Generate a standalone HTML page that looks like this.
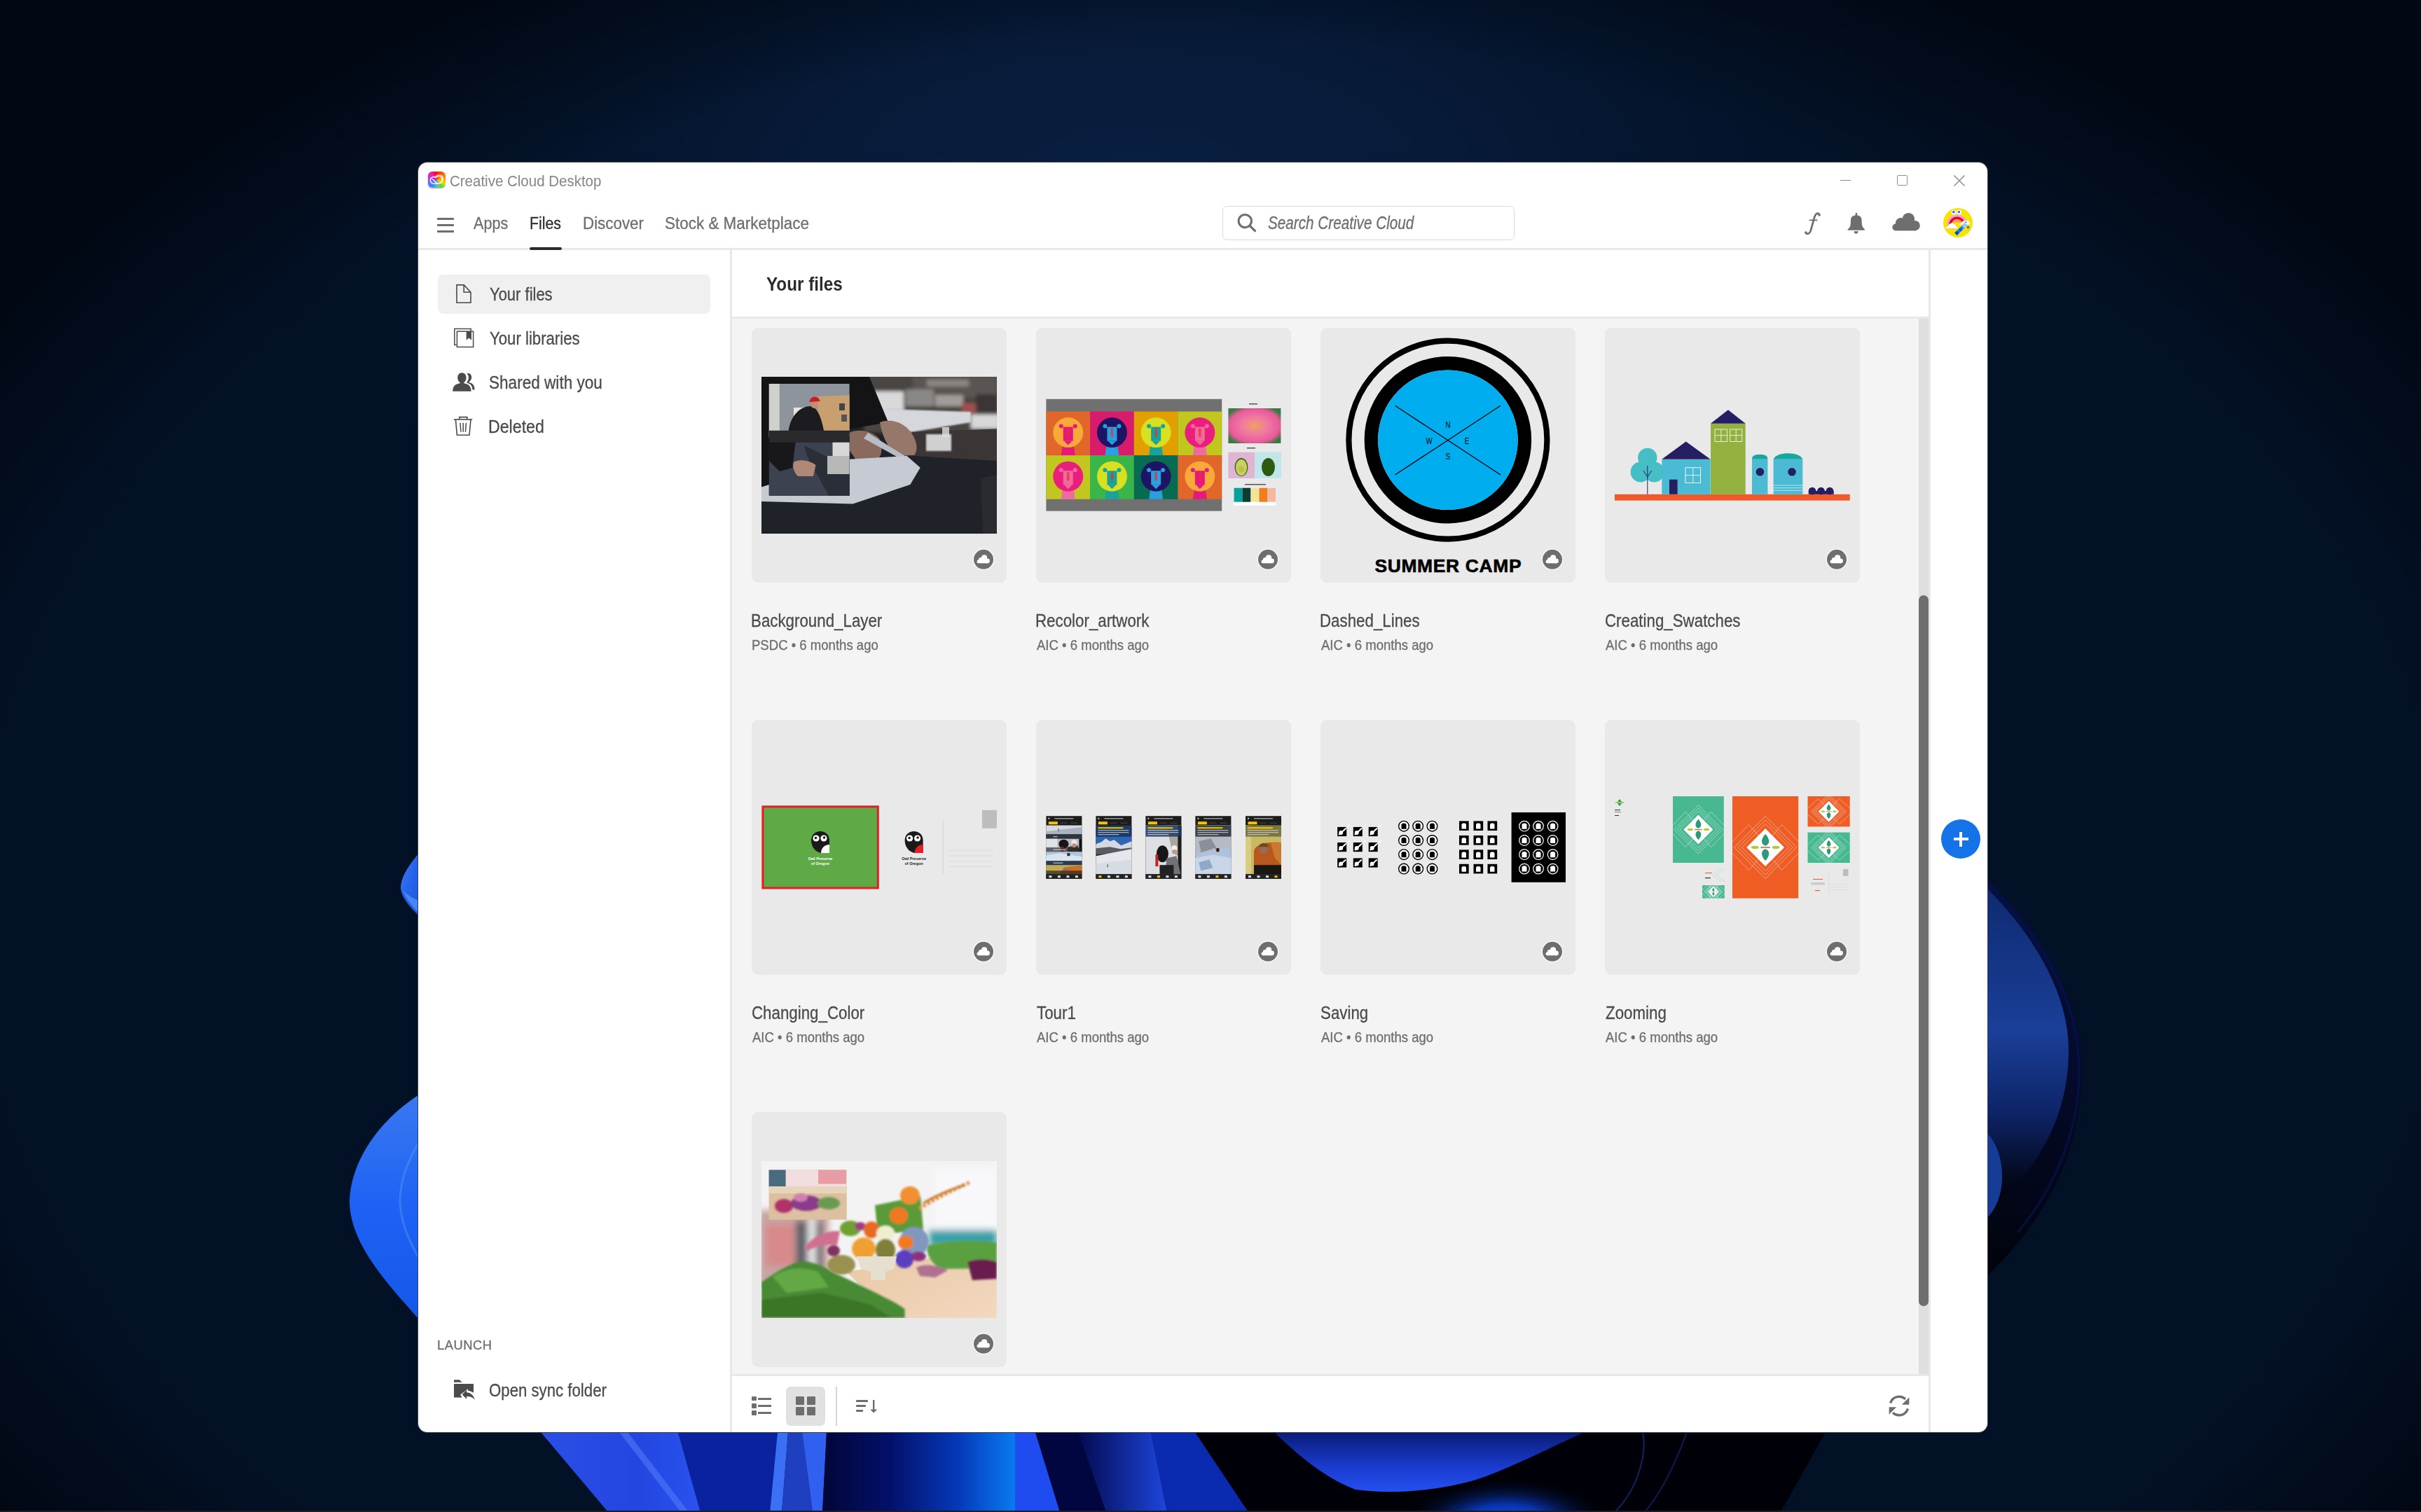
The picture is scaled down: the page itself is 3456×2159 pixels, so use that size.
<!DOCTYPE html>
<html><head><meta charset="utf-8"><title>Creative Cloud Desktop</title>
<style>
html,body{margin:0;padding:0;}
body{width:3456px;height:2159px;overflow:hidden;position:relative;background:#040b18;font-family:"Liberation Sans",sans-serif;}
.a{position:absolute;}
.t{position:absolute;white-space:nowrap;transform-origin:0 0;-webkit-text-stroke:0.3px currentColor;}
svg{position:absolute;overflow:visible;}
</style></head><body>
<svg style="left:0;top:0" width="3456" height="2159" viewBox="0 0 3456 2159">
<defs>
<radialGradient id="wglow" cx="1620" cy="250" r="1350" gradientUnits="userSpaceOnUse" gradientTransform="translate(1620 250) scale(1 0.45) translate(-1620 -250)">
<stop offset="0" stop-color="#0a1e40" stop-opacity="1"/>
<stop offset="0.35" stop-color="#081c3c" stop-opacity="0.8"/>
<stop offset="0.65" stop-color="#051630" stop-opacity="0.5"/>
<stop offset="1" stop-color="#031126" stop-opacity="0"/>
</radialGradient>
<radialGradient id="wvig" cx="1728" cy="1300" r="2100" gradientUnits="userSpaceOnUse" gradientTransform="translate(1728 1300) scale(1 0.714) translate(-1728 -1300)">
<stop offset="0" stop-color="#010814" stop-opacity="0"/>
<stop offset="0.83" stop-color="#010814" stop-opacity="0"/>
<stop offset="0.95" stop-color="#010814" stop-opacity="0.7"/>
<stop offset="1.12" stop-color="#010814" stop-opacity="1"/>
</radialGradient>
<linearGradient id="pl1" x1="0" y1="0" x2="1" y2="1">
<stop offset="0" stop-color="#3f7df2"/>
<stop offset="0.5" stop-color="#2463ea"/>
<stop offset="1" stop-color="#1a55e0"/>
</linearGradient>
<linearGradient id="pl2" x1="0" y1="0" x2="0" y2="1">
<stop offset="0" stop-color="#3a78f0"/>
<stop offset="0.5" stop-color="#1d62f5"/>
<stop offset="1" stop-color="#1658e8"/>
</linearGradient>
<radialGradient id="rb" cx="2800" cy="1480" r="200" gradientUnits="userSpaceOnUse">
<stop offset="0" stop-color="#1a45a8"/>
<stop offset="0.6" stop-color="#143a98"/>
<stop offset="1" stop-color="#071a55"/>
</radialGradient>
<linearGradient id="bb1" x1="0" y1="0" x2="1" y2="0">
<stop offset="0" stop-color="#020646"/>
<stop offset="0.55" stop-color="#041c8a"/>
<stop offset="1" stop-color="#0a7cf2"/>
</linearGradient>
<linearGradient id="bb2" x1="0" y1="0" x2="1" y2="0">
<stop offset="0" stop-color="#010430"/>
<stop offset="1" stop-color="#1e48e0"/>
</linearGradient>
<linearGradient id="bw" x1="0" y1="0" x2="0" y2="1">
<stop offset="0" stop-color="#071a70"/>
<stop offset="1" stop-color="#2148ea"/>
</linearGradient>
<linearGradient id="rbo" x1="0" y1="0" x2="0" y2="1"><stop offset="0" stop-color="#061040"/><stop offset="0.5" stop-color="#040a2a"/><stop offset="1" stop-color="#01030a"/></linearGradient>
<linearGradient id="rbi" x1="0" y1="0" x2="0" y2="1"><stop offset="0" stop-color="#0e2a70"/><stop offset="0.45" stop-color="#1a3f98"/><stop offset="0.7" stop-color="#0d2466"/><stop offset="0.92" stop-color="#020616"/><stop offset="1" stop-color="#01030c"/></linearGradient>
</defs>
<rect x="0" y="0" width="3456" height="2159" fill="#031126"/>
<rect x="0" y="0" width="3456" height="2159" fill="url(#wglow)"/>
<rect x="0" y="0" width="3456" height="2159" fill="url(#wvig)"/>
<!-- left petals -->
<path d="M600 1216 C588 1230 572 1250 572 1268 C573 1282 586 1296 600 1310 Z" fill="url(#pl1)"/>
<path d="M600 1286 C590 1284 582 1278 576 1272 C580 1284 590 1296 600 1306 Z" fill="#5a98f5" opacity="0.7"/>
<path d="M600 1562 C540 1600 500 1660 499 1716 C500 1780 560 1840 600 1886 Z" fill="url(#pl2)"/>
<path d="M600 1628 C580 1660 571 1690 571 1716 C572 1745 585 1775 600 1800" fill="none" stroke="#5d95f0" stroke-width="3" opacity="0.45"/>
<!-- right bloom -->
<path d="M2830 1250 C2910 1320 2972 1420 2972 1530 C2972 1650 2915 1750 2830 1828 Z" fill="url(#rbo)"/>
<path d="M2830 1258 C2905 1325 2968 1420 2968 1530 C2968 1620 2930 1700 2880 1760" fill="none" stroke="#06124a" stroke-width="4" opacity="0.7"/>
<path d="M2830 1262 C2905 1335 2953 1420 2953 1500 C2953 1580 2920 1650 2870 1700 C2855 1712 2842 1722 2830 1730 Z" fill="url(#rbi)"/>
<path d="M2830 1612 C2848 1625 2858 1652 2858 1680 C2858 1708 2848 1730 2830 1746 Z" fill="#173c95"/>
<!-- bottom petals -->
<defs>
<linearGradient id="pA" x1="0" y1="0" x2="1" y2="0"><stop offset="0" stop-color="#2a4ee6"/><stop offset="0.6" stop-color="#2346e0"/><stop offset="1" stop-color="#2a52ee"/></linearGradient>
<linearGradient id="pNav" x1="0" y1="0" x2="1" y2="0"><stop offset="0" stop-color="#010638"/><stop offset="0.35" stop-color="#03106a"/><stop offset="0.7" stop-color="#0538b8"/><stop offset="1" stop-color="#0a7af2"/></linearGradient>
<linearGradient id="pGr" x1="0" y1="0" x2="1" y2="0"><stop offset="0" stop-color="#030a50"/><stop offset="1" stop-color="#1e46dc"/></linearGradient>
<linearGradient id="pW" x1="0" y1="0" x2="0" y2="1"><stop offset="0" stop-color="#0a1c78"/><stop offset="0.6" stop-color="#1a3cd0"/><stop offset="1" stop-color="#2450f0"/></linearGradient>
<radialGradient id="pGlow" cx="0.5" cy="0.5" r="0.5"><stop offset="0" stop-color="#1a6cff"/><stop offset="0.45" stop-color="#0a40d8" stop-opacity="0.8"/><stop offset="1" stop-color="#000108" stop-opacity="0"/></radialGradient>
</defs>
<g>
<path d="M772 2045 L968 2045 L1000 2159 L868 2159 Z" fill="url(#pA)"/>
<path d="M884 2045 L896 2045 L983 2159 L972 2159 Z" fill="#4a72f5" opacity="0.7"/>
<path d="M968 2045 L1110 2045 L1099 2159 L1000 2159 Z" fill="#0a22a0"/>
<path d="M1110 2045 L1125 2045 L1116 2159 L1099 2159 Z" fill="#3a70f5"/>
<path d="M1125 2045 L1145 2045 L1160 2159 L1116 2159 Z" fill="#1d3fc0"/>
<path d="M1145 2045 L1180 2045 L1174 2159 L1160 2159 Z" fill="#3060f0"/>
<path d="M1180 2045 L1449 2045 L1449 2159 L1174 2159 Z" fill="url(#pNav)"/>
<path d="M1449 2045 L1478 2045 L1513 2159 L1449 2159 Z" fill="#1f4cf0"/>
<path d="M1478 2045 L1539 2045 L1579 2159 L1513 2159 Z" fill="#020640"/>
<path d="M1539 2045 L1643 2045 L1666 2159 L1579 2159 Z" fill="url(#pGr)"/>
<path d="M1643 2045 L1706 2045 L1782 2159 L1666 2159 Z" fill="#0a2ab0"/>
<path d="M1706 2045 L2606 2045 L2542 2159 L1782 2159 Z" fill="#000108"/>
<path d="M1819 2045 L2262 2045 C2210 2068 2150 2100 2100 2115 C2030 2133 1975 2132 1935 2127 C1890 2110 1850 2075 1819 2045 Z" fill="url(#pW)"/>
<ellipse cx="2150" cy="2180" rx="150" ry="70" fill="url(#pGlow)"/>
<path d="M2345 2045 C2352 2080 2335 2130 2305 2159" fill="none" stroke="#1a3aa0" stroke-width="2" opacity="0.6"/>
<path d="M2408 2045 C2392 2090 2372 2130 2348 2159" fill="none" stroke="#1a3aa0" stroke-width="2" opacity="0.5"/>
</g>
<rect x="0" y="2157" width="3456" height="2" fill="#1e1e22"/>
</svg>

<!-- window -->
<div class="a" style="left:596px;top:231px;width:2242px;height:1815px;border-radius:14px;background:#3a3f48;"></div>
<div class="a" style="left:597px;top:232px;width:2240px;height:1813px;border-radius:13px;background:#ffffff;overflow:hidden;">
</div>
<!-- header separator -->
<div class="a" style="left:597px;top:354px;width:2240px;height:3px;background:#e8e8e8;"></div>
<!-- tab underline -->
<div class="a" style="left:756px;top:353px;width:46px;height:4px;border-radius:2px;background:#2c2c2c;"></div>
<!-- sidebar border -->
<div class="a" style="left:1042px;top:357px;width:3px;height:1688px;background:#e8e8e8;"></div>
<!-- right border -->
<div class="a" style="left:2753px;top:357px;width:3px;height:1688px;background:#e8e8e8;"></div>
<!-- main header bottom border -->
<div class="a" style="left:1045px;top:452px;width:1708px;height:3px;background:#e8e8e8;"></div>
<!-- content bg -->
<div class="a" style="left:1045px;top:455px;width:1694px;height:1507px;background:#f4f4f4;overflow:hidden;">
</div>
<!-- scroll track + thumb -->
<div class="a" style="left:2739px;top:455px;width:14px;height:1507px;background:#dfdfdf;"></div>
<div class="a" style="left:2739px;top:850px;width:14px;height:1015px;border-radius:7px;background:#6e6e6e;"></div>
<!-- bottom toolbar border -->
<div class="a" style="left:1045px;top:1962px;width:1708px;height:3px;background:#e8e8e8;"></div>
<!-- selected sidebar item -->
<div class="a" style="left:625px;top:392px;width:389px;height:56px;border-radius:8px;background:#f0f0f0;"></div>
<!-- search box -->
<div class="a" style="left:1745px;top:294px;width:415px;height:47px;border-radius:7px;border:1px solid #d9d9d9;background:#fff;"></div>
<!-- grid button bg -->
<div class="a" style="left:1122px;top:1980px;width:56px;height:56px;border-radius:7px;background:#e1e1e1;"></div>
<div class="a" style="left:1193px;top:1980px;width:1.5px;height:56px;background:#d5d5d5;"></div>
<!-- plus button -->
<div class="a" style="left:2771px;top:1170px;width:56px;height:56px;border-radius:28px;background:#1473e6;"></div>
<div class="a" style="left:2788.5px;top:1196.3px;width:21px;height:3.4px;background:#fff;"></div>
<div class="a" style="left:2797.3px;top:1187.5px;width:3.4px;height:21px;background:#fff;"></div>
<!-- cards -->
<div class="a" style="left:1073px;top:468px;width:364px;height:364px;border-radius:9px;background:#e9e9e9;"></div>
<div class="a" style="left:1479px;top:468px;width:364px;height:364px;border-radius:9px;background:#e9e9e9;"></div>
<div class="a" style="left:1885px;top:468px;width:364px;height:364px;border-radius:9px;background:#e9e9e9;"></div>
<div class="a" style="left:2291px;top:468px;width:364px;height:364px;border-radius:9px;background:#e9e9e9;"></div>
<div class="a" style="left:1073px;top:1028px;width:364px;height:364px;border-radius:9px;background:#e9e9e9;"></div>
<div class="a" style="left:1479px;top:1028px;width:364px;height:364px;border-radius:9px;background:#e9e9e9;"></div>
<div class="a" style="left:1885px;top:1028px;width:364px;height:364px;border-radius:9px;background:#e9e9e9;"></div>
<div class="a" style="left:2291px;top:1028px;width:364px;height:364px;border-radius:9px;background:#e9e9e9;"></div>
<div class="a" style="left:1073px;top:1588px;width:364px;height:364px;border-radius:9px;background:#e9e9e9;"></div>
<svg style="left:1073px;top:468px" width="364" height="364" viewBox="0 0 364 364" >
<defs>
<filter id="c1blur" x="-20%" y="-20%" width="140%" height="140%"><feGaussianBlur stdDeviation="2.5"/></filter>
<filter id="c1blur2" x="-20%" y="-20%" width="140%" height="140%"><feGaussianBlur stdDeviation="0.8"/></filter>
<clipPath id="c1clip"><rect x="14" y="70" width="336" height="224"/></clipPath>
</defs>
<g clip-path="url(#c1clip)">
<rect x="14" y="70" width="336" height="224" fill="#1f2228"/>
<g filter="url(#c1blur)">
<rect x="160" y="60" width="200" height="90" fill="#4a4543"/>
<rect x="230" y="70" width="120" height="30" fill="#5a5553"/>
<rect x="250" y="74" width="60" height="10" fill="#8a8580"/>
<rect x="173" y="91" width="44" height="28" fill="#d9d9d9"/>
<rect x="220" y="88" width="40" height="24" fill="#8a8886"/>
<rect x="262" y="96" width="40" height="16" fill="#a09c98"/>
<rect x="300" y="108" width="20" height="14" fill="#a05050"/>
<rect x="313" y="124" width="40" height="20" fill="#d8d8d8"/>
<rect x="320" y="95" width="30" height="25" fill="#3a3636"/>
</g>
<path d="M183 115.5 L313 120 L313 135 L228.7 149 L197.4 144.4 Z" fill="#d5d7dc" filter="url(#c1blur2)"/>
<path d="M14 70 L168 70 L195 135 L139.6 144.4 L139.6 190 L14 227.5 Z" fill="#141416"/>
<path d="M228.7 149 L350 144.4 L350 190 L231 183 Z" fill="#3b3535"/>
<path d="M183 135 C195 130 215 132 228 150 C236 162 238 175 232 182 L205 183 C195 170 186 155 183 135 Z" fill="#96786a"/>
<path d="M139.6 150 C150 144 170 146 182 158 C188 170 186 182 180 187.8 L150 190 L139.6 175 Z" fill="#8a6a5c"/>
<path d="M166 150 L222 185 L218 190 L160 158 Z" fill="#b8bcc4"/>
<rect x="249" y="152" width="36" height="24" fill="#d0d0d0" filter="url(#c1blur2)"/>
<rect x="272" y="142" width="10" height="14" fill="#e0e0e2" opacity="0.8"/>
<path d="M14 227.5 L139.6 187.8 L221.5 183 L240.7 199.8 L226.3 224 L144.4 251.6 L14 248 Z" fill="#c6cad2"/>
<path d="M327 215 L350 210 L350 294 L330 294 Z" fill="#2a2b30"/>
<!-- inset -->
<rect x="24.8" y="80" width="114.8" height="160" fill="#111113"/>
<rect x="24.8" y="80" width="114.8" height="76.5" fill="#8d949c"/>
<rect x="24.8" y="80" width="15" height="76.5" fill="#d0d0cc"/>
<path d="M93.9 98 L139.6 96.3 L139.6 146.8 L93.9 146.8 Z" fill="#c8a070"/>
<rect x="125" y="108" width="8" height="10" fill="#444"/><rect x="128" y="124" width="8" height="10" fill="#555"/>
<rect x="60" y="114" width="18" height="26" fill="#e4e4e2"/>
<path d="M52 152 C54 125 70 112 84 112 C95 114 100 130 104 152 Z" fill="#1c1c20"/>
<circle cx="89.5" cy="109.5" r="5.2" fill="#c09070"/>
<path d="M82.5 106 C83 97 96 96 97.5 105 Z" fill="#d0182a"/>
<rect x="24.8" y="146.8" width="114.8" height="16.9" fill="#2a2a2c"/>
<rect x="24.8" y="163.7" width="114.8" height="76.3" fill="#3c4250"/>
<path d="M24.8 163.7 L62.6 163.7 L58 200 L40 205 L24.8 190 Z" fill="#18181a"/>
<path d="M75 168 L139.6 200 L139.6 240 L110 240 L80 185 Z" fill="#2a2e36"/>
<rect x="115.5" y="163.7" width="24.1" height="19.3" fill="#d8d8d8"/>
<rect x="108" y="183" width="31.6" height="26" fill="#b8b8b8"/>
<path d="M60 192 C66 188 80 188 91.5 196 L88 212 L66 212 C60 206 58 198 60 192 Z" fill="#b08878"/>
</g>
</svg>
<svg style="left:1073px;top:468px" width="364" height="364" viewBox="0 0 364 364" ><circle cx="331" cy="330.8" r="15.3" fill="#ffffff" opacity="0.85"/>
<circle cx="331" cy="330.8" r="14" fill="#6e6e6e"/>
<g fill="#fff"><circle cx="323.9" cy="333.9" r="2.4"/><circle cx="327.2" cy="331.4" r="3.3"/><circle cx="332.1" cy="328.4" r="4.1"/><circle cx="336.5" cy="332.9" r="3.4"/><rect x="323.9" y="331" width="12.6" height="5.3"/><rect x="327" y="328.5" width="6" height="4"/></g></svg>
<svg style="left:1477px;top:468px" width="364" height="364" viewBox="0 0 364 364" ><rect x="16.4" y="101.8" width="250.8" height="159.9" fill="#707070"/><rect x="16.4" y="119.6" width="62.7" height="62.6" fill="#e0662a"/><path d="M37.75 182.2 L39.75 168.6 L55.75 168.6 L57.75 182.2 Z" fill="#e6197a"/><circle cx="47.75" cy="149.6" r="21.5" fill="#f9a93a"/><circle cx="37.75" cy="140.6" r="3" fill="#e6197a"/><circle cx="57.75" cy="140.6" r="3" fill="#e6197a"/><rect x="40.75" y="141.6" width="14" height="20" fill="#e6197a"/><path d="M41.75 161.6 L53.75 161.6 L47.75 167.6 Z" fill="#e6197a"/><rect x="45.95" y="143.6" width="3.6" height="12" fill="#e63030" opacity="0.7"/><rect x="79.1" y="119.6" width="62.7" height="62.6" fill="#d81b6a"/><path d="M100.44999999999999 182.2 L102.44999999999999 168.6 L118.44999999999999 168.6 L120.44999999999999 182.2 Z" fill="#2aa0e0"/><circle cx="110.44999999999999" cy="149.6" r="21.5" fill="#1d1464"/><circle cx="100.44999999999999" cy="140.6" r="3" fill="#2aa0e0"/><circle cx="120.44999999999999" cy="140.6" r="3" fill="#2aa0e0"/><rect x="103.44999999999999" y="141.6" width="14" height="20" fill="#2aa0e0"/><path d="M104.44999999999999 161.6 L116.44999999999999 161.6 L110.44999999999999 167.6 Z" fill="#2aa0e0"/><rect x="108.64999999999999" y="143.6" width="3.6" height="12" fill="#e63030" opacity="0.7"/><rect x="141.8" y="119.6" width="62.7" height="62.6" fill="#e2a000"/><path d="M163.15 182.2 L165.15 168.6 L181.15 168.6 L183.15 182.2 Z" fill="#17a39a"/><circle cx="173.15" cy="149.6" r="21.5" fill="#d7e021"/><circle cx="163.15" cy="140.6" r="3" fill="#17a39a"/><circle cx="183.15" cy="140.6" r="3" fill="#17a39a"/><rect x="166.15" y="141.6" width="14" height="20" fill="#17a39a"/><path d="M167.15 161.6 L179.15 161.6 L173.15 167.6 Z" fill="#17a39a"/><rect x="171.35" y="143.6" width="3.6" height="12" fill="#e63030" opacity="0.7"/><rect x="204.5" y="119.6" width="62.7" height="62.6" fill="#c1c71f"/><path d="M225.85 182.2 L227.85 168.6 L243.85 168.6 L245.85 182.2 Z" fill="#f06aa0"/><circle cx="235.85" cy="149.6" r="21.5" fill="#e91e7d"/><circle cx="225.85" cy="140.6" r="3" fill="#f06aa0"/><circle cx="245.85" cy="140.6" r="3" fill="#f06aa0"/><rect x="228.85" y="141.6" width="14" height="20" fill="#f06aa0"/><path d="M229.85 161.6 L241.85 161.6 L235.85 167.6 Z" fill="#f06aa0"/><rect x="234.04999999999998" y="143.6" width="3.6" height="12" fill="#e63030" opacity="0.7"/><rect x="16.4" y="182.2" width="62.7" height="62.6" fill="#c1c71f"/><path d="M37.75 244.79999999999998 L39.75 231.2 L55.75 231.2 L57.75 244.79999999999998 Z" fill="#f06aa0"/><circle cx="47.75" cy="212.2" r="21.5" fill="#e91e7d"/><circle cx="37.75" cy="203.2" r="3" fill="#f06aa0"/><circle cx="57.75" cy="203.2" r="3" fill="#f06aa0"/><rect x="40.75" y="204.2" width="14" height="20" fill="#f06aa0"/><path d="M41.75 224.2 L53.75 224.2 L47.75 230.2 Z" fill="#f06aa0"/><rect x="45.95" y="206.2" width="3.6" height="12" fill="#e63030" opacity="0.7"/><rect x="79.1" y="182.2" width="62.7" height="62.6" fill="#3ab54a"/><path d="M100.44999999999999 244.79999999999998 L102.44999999999999 231.2 L118.44999999999999 231.2 L120.44999999999999 244.79999999999998 Z" fill="#17a39a"/><circle cx="110.44999999999999" cy="212.2" r="21.5" fill="#d7e021"/><circle cx="100.44999999999999" cy="203.2" r="3" fill="#17a39a"/><circle cx="120.44999999999999" cy="203.2" r="3" fill="#17a39a"/><rect x="103.44999999999999" y="204.2" width="14" height="20" fill="#17a39a"/><path d="M104.44999999999999 224.2 L116.44999999999999 224.2 L110.44999999999999 230.2 Z" fill="#17a39a"/><rect x="108.64999999999999" y="206.2" width="3.6" height="12" fill="#e63030" opacity="0.7"/><rect x="141.8" y="182.2" width="62.7" height="62.6" fill="#076b52"/><path d="M163.15 244.79999999999998 L165.15 231.2 L181.15 231.2 L183.15 244.79999999999998 Z" fill="#2aa0e0"/><circle cx="173.15" cy="212.2" r="21.5" fill="#1d1464"/><circle cx="163.15" cy="203.2" r="3" fill="#2aa0e0"/><circle cx="183.15" cy="203.2" r="3" fill="#2aa0e0"/><rect x="166.15" y="204.2" width="14" height="20" fill="#2aa0e0"/><path d="M167.15 224.2 L179.15 224.2 L173.15 230.2 Z" fill="#2aa0e0"/><rect x="171.35" y="206.2" width="3.6" height="12" fill="#e63030" opacity="0.7"/><rect x="204.5" y="182.2" width="62.7" height="62.6" fill="#e0662a"/><path d="M225.85 244.79999999999998 L227.85 231.2 L243.85 231.2 L245.85 244.79999999999998 Z" fill="#e6197a"/><circle cx="235.85" cy="212.2" r="21.5" fill="#f9a93a"/><circle cx="225.85" cy="203.2" r="3" fill="#e6197a"/><circle cx="245.85" cy="203.2" r="3" fill="#e6197a"/><rect x="228.85" y="204.2" width="14" height="20" fill="#e6197a"/><path d="M229.85 224.2 L241.85 224.2 L235.85 230.2 Z" fill="#e6197a"/><rect x="234.04999999999998" y="206.2" width="3.6" height="12" fill="#e63030" opacity="0.7"/>
<rect x="306" y="108" width="12" height="1.5" fill="#555"/>
<defs><radialGradient id="flw" cx="0.5" cy="0.5" r="0.6"><stop offset="0" stop-color="#f0a060"/><stop offset="0.4" stop-color="#f07aa0"/><stop offset="0.8" stop-color="#e85a9a"/><stop offset="1" stop-color="#3a7a40"/></radialGradient></defs>
<rect x="276.4" y="115" width="75" height="50" fill="url(#flw)"/>
<rect x="303" y="171" width="12" height="1.5" fill="#555"/>
<rect x="276.4" y="177.7" width="37.6" height="37.3" fill="#e0b4d3"/>
<rect x="314" y="177.7" width="38" height="37.3" fill="#c0e6ea"/>
<ellipse cx="295" cy="199" rx="9.5" ry="13" fill="#3a6a20"/><ellipse cx="295" cy="199.5" rx="8" ry="11.5" fill="#c8d060"/><circle cx="295" cy="202" r="4.5" fill="#b8c050"/>
<ellipse cx="333.5" cy="199" rx="9.5" ry="13" fill="#2e5a10"/>
<rect x="300" y="223" width="30" height="1.5" fill="#555"/>
<rect x="284" y="228.7" width="60" height="25" fill="#ffffff"/>
<rect x="284.5" y="228.7" width="12" height="20" fill="#05a19a"/>
<rect x="296.5" y="228.7" width="12" height="20" fill="#0a3d35"/>
<rect x="308.5" y="228.7" width="12" height="20" fill="#f3e49a"/>
<rect x="320.5" y="228.7" width="12" height="20" fill="#f07e1a"/>
<rect x="332.5" y="228.7" width="11.5" height="20" fill="#f3b8a0"/>
</svg>
<svg style="left:1479px;top:468px" width="364" height="364" viewBox="0 0 364 364" ><circle cx="331" cy="330.8" r="15.3" fill="#ffffff" opacity="0.85"/>
<circle cx="331" cy="330.8" r="14" fill="#6e6e6e"/>
<g fill="#fff"><circle cx="323.9" cy="333.9" r="2.4"/><circle cx="327.2" cy="331.4" r="3.3"/><circle cx="332.1" cy="328.4" r="4.1"/><circle cx="336.5" cy="332.9" r="3.4"/><rect x="323.9" y="331" width="12.6" height="5.3"/><rect x="327" y="328.5" width="6" height="4"/></g></svg>
<svg style="left:1882px;top:468px" width="364" height="364" viewBox="0 0 364 364" >
<circle cx="184.9" cy="160.2" r="141.5" fill="none" stroke="#000" stroke-width="8.2"/>
<circle cx="184.9" cy="160.2" r="109.5" fill="none" stroke="#000" stroke-width="19.5"/>
<circle cx="184.9" cy="160.2" r="99.8" fill="#00adef"/>
<path d="M109.5 111.2 L260 210 M109.5 210 L260 111.2" stroke="#000" stroke-width="1.3"/>
<text x="185" y="143.5" font-family="Liberation Sans" font-size="13" text-anchor="middle" fill="#000" transform="translate(185 0) scale(0.75 1) translate(-185 0)">N</text>
<text x="158" y="166" font-family="Liberation Sans" font-size="13" text-anchor="middle" fill="#000" transform="translate(158 0) scale(0.75 1) translate(-158 0)">W</text>
<text x="212" y="166" font-family="Liberation Sans" font-size="13" text-anchor="middle" fill="#000" transform="translate(212 0) scale(0.75 1) translate(-212 0)">E</text>
<text x="185" y="188" font-family="Liberation Sans" font-size="13" text-anchor="middle" fill="#000" transform="translate(185 0) scale(0.75 1) translate(-185 0)">S</text>
<text x="185.3" y="349.4" font-family="Liberation Sans" font-weight="700" font-size="26.5" text-anchor="middle" fill="#000" letter-spacing="0.6" stroke="#000" stroke-width="0.6">SUMMER CAMP</text>
</svg>
<svg style="left:1885px;top:468px" width="364" height="364" viewBox="0 0 364 364" ><circle cx="331" cy="330.8" r="15.3" fill="#ffffff" opacity="0.85"/>
<circle cx="331" cy="330.8" r="14" fill="#6e6e6e"/>
<g fill="#fff"><circle cx="323.9" cy="333.9" r="2.4"/><circle cx="327.2" cy="331.4" r="3.3"/><circle cx="332.1" cy="328.4" r="4.1"/><circle cx="336.5" cy="332.9" r="3.4"/><rect x="323.9" y="331" width="12.6" height="5.3"/><rect x="327" y="328.5" width="6" height="4"/></g></svg>
<svg style="left:2288px;top:468px" width="364" height="364" viewBox="0 0 364 364" >
<rect x="16.9" y="237.8" width="335.8" height="8.9" fill="#f05a28"/>
<g fill="#45bfc4"><circle cx="63.8" cy="185.4" r="13.7"/><circle cx="54" cy="206" r="14.4"/><circle cx="73.4" cy="206" r="14.4"/></g>
<path d="M63.8 197 L63.8 237.8 M58 204 L63.8 213 L69.6 204" fill="none" stroke="#261e63" stroke-width="1"/>
<rect x="84.3" y="187.8" width="69.3" height="50" fill="#4bbbd3"/>
<path d="M84.3 187.8 L118.7 162.5 L153.6 187.8 Z" fill="#261e63"/>
<rect x="95" y="216.7" width="11.6" height="21.1" fill="#261e63"/>
<rect x="118" y="199.8" width="21.6" height="21.7" fill="none" stroke="#fff" stroke-width="0.9"/>
<path d="M128.8 199.8 L128.8 221.5 M118 210.6 L139.6 210.6" stroke="#fff" stroke-width="0.8"/>
<rect x="154" y="136.7" width="49.7" height="101.1" fill="#92b13f"/>
<path d="M154 136.7 L178.9 117.2 L203.7 136.7 Z" fill="#261e63"/>
<g fill="none" stroke="#fff" stroke-width="0.8"><rect x="160" y="145" width="17.7" height="17.5"/><rect x="181.7" y="145" width="17.1" height="17.5"/><path d="M168.8 145 L168.8 162.5 M160 153.7 L177.7 153.7 M190.2 145 L190.2 162.5 M181.7 153.7 L198.8 153.7"/></g>
<rect x="213" y="187.8" width="22.4" height="50" fill="#4bbbd3"/>
<path d="M213 187.8 C213 182 218 181 224.2 181 C230 181 235.4 182 235.4 187.8 Z" fill="#16a89e"/>
<circle cx="224.4" cy="205.8" r="5.8" fill="#261e63"/>
<rect x="243.6" y="187.8" width="41.7" height="50" fill="#4bbbd3"/>
<path d="M243.6 187.8 C246 182 255 179.3 264.5 179.3 C274 179.3 283 182 285.3 187.8 Z" fill="#16a89e"/>
<circle cx="270" cy="205.8" r="5.8" fill="#261e63"/>
<path d="M243.6 225 L285.3 225 M243.6 228.7 L285.3 228.7 M243.6 232.3 L285.3 232.3" stroke="#e8f4f8" stroke-width="0.7"/>
<g fill="#261e63"><circle cx="299" cy="233" r="5.3"/><circle cx="311.5" cy="233" r="5.3"/><circle cx="324" cy="233" r="5.3"/><rect x="293.7" y="233" width="36" height="4.8"/></g>
</svg>
<svg style="left:2291px;top:468px" width="364" height="364" viewBox="0 0 364 364" ><circle cx="331" cy="330.8" r="15.3" fill="#ffffff" opacity="0.85"/>
<circle cx="331" cy="330.8" r="14" fill="#6e6e6e"/>
<g fill="#fff"><circle cx="323.9" cy="333.9" r="2.4"/><circle cx="327.2" cy="331.4" r="3.3"/><circle cx="332.1" cy="328.4" r="4.1"/><circle cx="336.5" cy="332.9" r="3.4"/><rect x="323.9" y="331" width="12.6" height="5.3"/><rect x="327" y="328.5" width="6" height="4"/></g></svg>
<svg style="left:1073px;top:1028px" width="364" height="364" viewBox="0 0 364 364" >
<rect x="14.4" y="122.3" width="167.4" height="119.2" fill="#e31e24"/>
<rect x="17.4" y="125.3" width="161.4" height="113.2" fill="#5fa946"/>

<path d="M85 172 C85 164 91 159 98 159 C105 159 111 164 111 172 L111 190 L101 190 C92 190 85 182 85 172 Z" fill="#1a1a1a"/>
<path d="M111 178 L111 190 L99 190 C99 183 104 178 111 178 Z" fill="#ffffff"/>
<circle cx="92" cy="169" r="4.6" fill="#fff"/><circle cx="103" cy="169" r="4.6" fill="#fff"/>
<circle cx="91.5" cy="168.5" r="1.8" fill="#1a1a1a"/><circle cx="103.5" cy="168" r="1.8" fill="#1a1a1a"/>
<text x="98" y="200" font-family="Liberation Sans" font-weight="700" font-size="5.5" text-anchor="middle" fill="#ffffff">Owl Preserve</text>
<text x="98" y="207" font-family="Liberation Sans" font-weight="700" font-size="5.5" text-anchor="middle" fill="#ffffff">of Oregon</text>

<path d="M218.6 172 C218.6 164 224.6 159 231.6 159 C238.6 159 244.6 164 244.6 172 L244.6 190 L234.6 190 C225.6 190 218.6 182 218.6 172 Z" fill="#1a1a1a"/>
<path d="M244.6 178 L244.6 190 L232.6 190 C232.6 183 237.6 178 244.6 178 Z" fill="#e31e24"/>
<circle cx="225.6" cy="169" r="4.6" fill="#fff"/><circle cx="236.6" cy="169" r="4.6" fill="#fff"/>
<circle cx="225.1" cy="168.5" r="1.8" fill="#1a1a1a"/><circle cx="237.1" cy="168" r="1.8" fill="#1a1a1a"/>
<text x="231.6" y="200" font-family="Liberation Sans" font-weight="700" font-size="5.5" text-anchor="middle" fill="#1a1a1a">Owl Preserve</text>
<text x="231.6" y="207" font-family="Liberation Sans" font-weight="700" font-size="5.5" text-anchor="middle" fill="#1a1a1a">of Oregon</text>
<rect x="272.8" y="144" width="0.8" height="76" fill="#d0d0d0"/>
<rect x="329" y="128.8" width="21" height="26" fill="#bdbdbd"/>
<g fill="#d4d4d4"><rect x="282" y="185.8" width="63" height="0.7"/><rect x="282" y="193.6" width="63" height="0.7"/><rect x="282" y="201.4" width="63" height="0.7"/><rect x="282" y="209.2" width="63" height="0.7"/></g>
</svg>
<svg style="left:1073px;top:1028px" width="364" height="364" viewBox="0 0 364 364" ><circle cx="331" cy="330.8" r="15.3" fill="#ffffff" opacity="0.85"/>
<circle cx="331" cy="330.8" r="14" fill="#6e6e6e"/>
<g fill="#fff"><circle cx="323.9" cy="333.9" r="2.4"/><circle cx="327.2" cy="331.4" r="3.3"/><circle cx="332.1" cy="328.4" r="4.1"/><circle cx="336.5" cy="332.9" r="3.4"/><rect x="323.9" y="331" width="12.6" height="5.3"/><rect x="327" y="328.5" width="6" height="4"/></g></svg>
<svg style="left:1477px;top:1028px" width="364" height="364" viewBox="0 0 364 364" ><rect x="16.4" y="137.2" width="51" height="89.6" fill="#1c1c1c"/><path d="M16.4 150.6 L67.4 150.6 L67.4 163.2 L16.4 163.2 Z" fill="#d4d8e0"/><path d="M16.4 159.2 L67.4 153.2 L67.4 163.2 L16.4 163.2 Z" fill="#aab2bf"/><rect x="33.4" y="155.2" width="1.5" height="4" fill="#8a6a30"/><rect x="16.4" y="163.2" width="51" height="6.5" fill="#30343c"/><rect x="26.4" y="166.2" width="6" height="1" fill="#ddd"/><rect x="16.4" y="169.7" width="51" height="18.5" fill="#b8bcc4"/><rect x="16.4" y="169.7" width="16" height="12" fill="#e0e2e6"/><ellipse cx="41.4" cy="177.2" rx="7" ry="6.5" fill="#161616"/><rect x="37.4" y="181.2" width="4" height="7" fill="#b82020"/><path d="M46.4 188.2 L47.4 181.2 L61.4 179.2 L64.4 188.2 Z" fill="#4a3e36"/><circle cx="56.4" cy="175.2" r="4.2" fill="#e8e8e8"/><circle cx="56.4" cy="179.2" r="3" fill="#b89078"/><rect x="63.4" y="169.7" width="4" height="18.5" fill="#101010"/><rect x="16.4" y="182.2" width="51" height="6" fill="#202428" opacity="0.6"/><rect x="26.4" y="184.7" width="17" height="1" fill="#ddd"/><rect x="16.4" y="188.2" width="51" height="19" fill="#b0c4de"/><path d="M16.4 193.2 L36.4 190.2 L67.4 195.2 L67.4 201.2 L16.4 201.2 Z" fill="#d8e4f0"/><rect x="46.4" y="190.2" width="4" height="4" fill="#2a2a2a"/><rect x="16.4" y="201.2" width="51" height="6" fill="#2c3a50"/><rect x="26.4" y="203.7" width="14" height="1" fill="#ddd"/><rect x="16.4" y="207.2" width="51" height="13" fill="#c0aa58"/><path d="M36.4 220.2 C38.4 211.2 46.4 208.2 67.4 208.2 L67.4 220.2 Z" fill="#c87028"/><circle cx="44.4" cy="214.2" r="4" fill="#a07060"/><rect x="16.4" y="215.2" width="51" height="5" fill="#2a2418" opacity="0.7"/><rect x="19.4" y="139.7" width="2" height="2" fill="#ccc"/><rect x="28.4" y="140.2" width="27" height="1.2" fill="#bbb"/><rect x="19.9" y="145.2" width="13" height="4" fill="#f2c500"/><rect x="36.4" y="146.7" width="10" height="0.8" fill="#555"/><rect x="51.4" y="146.7" width="10" height="0.8" fill="#555"/><rect x="16.4" y="220.2" width="51" height="6.6" fill="#222226"/><rect x="20.4" y="222.2" width="4" height="3" fill="#ddd"/><rect x="32.9" y="222.2" width="4" height="3" fill="#ddd"/><rect x="45.4" y="222.2" width="4" height="3" fill="#ddd"/><rect x="57.9" y="222.2" width="4" height="3" fill="#ddd"/><rect x="87.4" y="137.2" width="51" height="89.6" fill="#1c1c1c"/><rect x="87.4" y="150.6" width="51" height="16" fill="#1c3a66"/><rect x="87.4" y="166.6" width="51" height="14" fill="#2c66b4"/><path d="M87.4 177.2 L95.4 174.2 L101.4 169.2 L107.4 173.2 L113.4 171.2 L123.4 179.2 L138.4 173.2 L138.4 190.2 L87.4 190.2 Z" fill="#d4d8e0"/><path d="M87.4 183.2 L107.4 181.2 L122.4 184.2 L138.4 182.2 L138.4 189.2 L87.4 192.2 Z" fill="#5a5a62"/><path d="M87.4 194.2 L138.4 184.2 L138.4 220.2 L87.4 220.2 Z" fill="#e4e8ee"/><path d="M87.4 205.2 L138.4 199.2 L138.4 220.2 L87.4 220.2 Z" fill="#cdd4de" opacity="0.6"/><rect x="103.4" y="206.2" width="1.5" height="4" fill="#8a6a30"/><rect x="90.4" y="139.7" width="2" height="2" fill="#ccc"/><rect x="99.4" y="140.2" width="27" height="1.2" fill="#bbb"/><rect x="90.9" y="145.2" width="13" height="4" fill="#f2c500"/><rect x="107.4" y="146.7" width="10" height="0.8" fill="#555"/><rect x="122.4" y="146.7" width="10" height="0.8" fill="#555"/><rect x="90.4" y="153.2" width="36" height="2" fill="#f2c500"/><rect x="90.4" y="157.2" width="44" height="1" fill="#ccc"/><rect x="90.4" y="160.2" width="44" height="1" fill="#ccc"/><rect x="90.4" y="163.2" width="30" height="1" fill="#ccc"/><rect x="87.4" y="220.2" width="51" height="6.6" fill="#222226"/><rect x="91.4" y="222.2" width="4" height="3" fill="#f2c500"/><rect x="103.9" y="222.2" width="4" height="3" fill="#ddd"/><rect x="116.4" y="222.2" width="4" height="3" fill="#ddd"/><rect x="128.9" y="222.2" width="4" height="3" fill="#ddd"/><rect x="158.4" y="137.2" width="51" height="89.6" fill="#1c1c1c"/><rect x="158.4" y="150.6" width="51" height="69.6" fill="#dcdfe4"/><path d="M188.4 150.6 L209.4 150.6 L209.4 197.2 L196.4 189.2 Z" fill="#aaa69e"/><rect x="204.4" y="150.6" width="5" height="69.6" fill="#1e1e1e"/><rect x="158.4" y="150.6" width="51" height="16" fill="#1c3a66" opacity="0.85"/><ellipse cx="182.4" cy="191.2" rx="8.5" ry="12" fill="#161616"/><rect x="172.4" y="192.2" width="4" height="17" fill="#c02428"/><path d="M186.4 220.2 L188.4 197.2 L202.4 194.2 L208.4 220.2 Z" fill="#707278"/><circle cx="199.4" cy="183.2" r="4.2" fill="#eeeeee"/><circle cx="199.4" cy="188.2" r="3.2" fill="#c09a80"/><rect x="178.4" y="207.2" width="20" height="13" fill="#222"/><rect x="161.4" y="139.7" width="2" height="2" fill="#ccc"/><rect x="170.4" y="140.2" width="27" height="1.2" fill="#bbb"/><rect x="161.9" y="145.2" width="13" height="4" fill="#f2c500"/><rect x="178.4" y="146.7" width="10" height="0.8" fill="#555"/><rect x="193.4" y="146.7" width="10" height="0.8" fill="#555"/><rect x="161.4" y="153.2" width="36" height="2" fill="#f2c500"/><rect x="161.4" y="157.2" width="44" height="1" fill="#ccc"/><rect x="161.4" y="160.2" width="44" height="1" fill="#ccc"/><rect x="161.4" y="163.2" width="30" height="1" fill="#ccc"/><rect x="158.4" y="220.2" width="51" height="6.6" fill="#222226"/><rect x="162.4" y="222.2" width="4" height="3" fill="#ddd"/><rect x="174.9" y="222.2" width="4" height="3" fill="#f2c500"/><rect x="187.4" y="222.2" width="4" height="3" fill="#ddd"/><rect x="199.9" y="222.2" width="4" height="3" fill="#ddd"/><rect x="229.4" y="137.2" width="51" height="89.6" fill="#1c1c1c"/><rect x="229.4" y="150.6" width="51" height="69.6" fill="#aec2dc"/><path d="M229.4 150.6 L280.4 150.6 L280.4 181.2 L259.4 185.2 L229.4 191.2 Z" fill="#b6bac2"/><path d="M234.4 173.2 L251.4 169.2 L259.4 182.2 L237.4 189.2 Z" fill="#8a909a"/><path d="M229.4 197.2 L254.4 192.2 L280.4 197.2 L280.4 220.2 L229.4 220.2 Z" fill="#c8d6e8"/><path d="M234.4 203.2 L249.4 199.2 L254.4 211.2 L237.4 215.2 Z" fill="#8ea8c8"/><rect x="259.4" y="183.2" width="4" height="5" fill="#1a1a1a"/><rect x="258.4" y="183.2" width="2" height="2" fill="#c02020"/><rect x="229.4" y="150.6" width="51" height="16" fill="#141a24" opacity="0.75"/><rect x="232.4" y="139.7" width="2" height="2" fill="#ccc"/><rect x="241.4" y="140.2" width="27" height="1.2" fill="#bbb"/><rect x="232.9" y="145.2" width="13" height="4" fill="#f2c500"/><rect x="249.4" y="146.7" width="10" height="0.8" fill="#555"/><rect x="264.4" y="146.7" width="10" height="0.8" fill="#555"/><rect x="232.4" y="153.2" width="36" height="2" fill="#f2c500"/><rect x="232.4" y="157.2" width="44" height="1" fill="#ccc"/><rect x="232.4" y="160.2" width="44" height="1" fill="#ccc"/><rect x="232.4" y="163.2" width="30" height="1" fill="#ccc"/><rect x="229.4" y="220.2" width="51" height="6.6" fill="#222226"/><rect x="233.4" y="222.2" width="4" height="3" fill="#ddd"/><rect x="245.9" y="222.2" width="4" height="3" fill="#ddd"/><rect x="258.4" y="222.2" width="4" height="3" fill="#f2c500"/><rect x="270.9" y="222.2" width="4" height="3" fill="#ddd"/><rect x="301" y="137.2" width="51" height="89.6" fill="#1c1c1c"/><rect x="301" y="150.6" width="51" height="69.6" fill="#c8b864"/><rect x="301" y="150.6" width="8" height="69.6" fill="#d8cc80"/><path d="M313 220.2 L313 187.2 C315 177.2 331 173.2 352 175.2 L352 220.2 Z" fill="#b85820"/><path d="M337 175.2 L352 175.2 L352 207.2 L343 197.2 Z" fill="#c87a30"/><circle cx="327" cy="185.2" r="6" fill="#9a6a58"/><path d="M320 181.2 C321 174.2 333 174.2 334 181.2 Z" fill="#6a4a20"/><rect x="313" y="207.2" width="39" height="13" fill="#1a1612"/><rect x="301" y="150.6" width="51" height="16" fill="#6e6a40" opacity="0.85"/><rect x="304" y="139.7" width="2" height="2" fill="#ccc"/><rect x="313" y="140.2" width="27" height="1.2" fill="#bbb"/><rect x="304.5" y="145.2" width="13" height="4" fill="#f2c500"/><rect x="321" y="146.7" width="10" height="0.8" fill="#555"/><rect x="336" y="146.7" width="10" height="0.8" fill="#555"/><rect x="304" y="153.2" width="36" height="2" fill="#f2c500"/><rect x="304" y="157.2" width="44" height="1" fill="#ccc"/><rect x="304" y="160.2" width="44" height="1" fill="#ccc"/><rect x="304" y="163.2" width="30" height="1" fill="#ccc"/><rect x="301" y="220.2" width="51" height="6.6" fill="#222226"/><rect x="305.0" y="222.2" width="4" height="3" fill="#ddd"/><rect x="317.5" y="222.2" width="4" height="3" fill="#ddd"/><rect x="330.0" y="222.2" width="4" height="3" fill="#ddd"/><rect x="342.5" y="222.2" width="4" height="3" fill="#f2c500"/></svg>
<svg style="left:1479px;top:1028px" width="364" height="364" viewBox="0 0 364 364" ><circle cx="331" cy="330.8" r="15.3" fill="#ffffff" opacity="0.85"/>
<circle cx="331" cy="330.8" r="14" fill="#6e6e6e"/>
<g fill="#fff"><circle cx="323.9" cy="333.9" r="2.4"/><circle cx="327.2" cy="331.4" r="3.3"/><circle cx="332.1" cy="328.4" r="4.1"/><circle cx="336.5" cy="332.9" r="3.4"/><rect x="323.9" y="331" width="12.6" height="5.3"/><rect x="327" y="328.5" width="6" height="4"/></g></svg>
<svg style="left:1882px;top:1028px" width="364" height="364" viewBox="0 0 364 364" ><rect x="27.2" y="152.9" width="13" height="13.2" fill="#000"/><path d="M29.2 163.9 L39.2 154.9" stroke="#fff" stroke-width="2"/><circle cx="32.2" cy="160.9" r="3" fill="#fff"/><path d="M36.2 156.9 L45.2 149.9" stroke="#fff" stroke-width="1.2"/><rect x="27.2" y="175" width="13" height="13.2" fill="#000"/><path d="M29.2 186 L39.2 177" stroke="#fff" stroke-width="2"/><circle cx="32.2" cy="183" r="3" fill="#fff"/><path d="M36.2 179 L45.2 172" stroke="#fff" stroke-width="1.2"/><rect x="27.2" y="197.4" width="13" height="13.2" fill="#000"/><path d="M29.2 208.4 L39.2 199.4" stroke="#fff" stroke-width="2"/><circle cx="32.2" cy="205.4" r="3" fill="#fff"/><rect x="49.8" y="152.9" width="13" height="13.2" fill="#000"/><path d="M51.8 163.9 L61.8 154.9" stroke="#fff" stroke-width="2"/><circle cx="54.8" cy="160.9" r="3" fill="#fff"/><path d="M58.8 156.9 L67.8 149.9" stroke="#fff" stroke-width="1.2"/><rect x="49.8" y="175" width="13" height="13.2" fill="#000"/><path d="M51.8 186 L61.8 177" stroke="#fff" stroke-width="2"/><circle cx="54.8" cy="183" r="3" fill="#fff"/><path d="M58.8 179 L67.8 172" stroke="#fff" stroke-width="1.2"/><rect x="49.8" y="197.4" width="13" height="13.2" fill="#000"/><path d="M51.8 208.4 L61.8 199.4" stroke="#fff" stroke-width="2"/><circle cx="54.8" cy="205.4" r="3" fill="#fff"/><rect x="71.7" y="152.9" width="13" height="13.2" fill="#000"/><path d="M73.7 163.9 L83.7 154.9" stroke="#fff" stroke-width="2"/><circle cx="76.7" cy="160.9" r="3" fill="#fff"/><path d="M80.7 156.9 L89.7 149.9" stroke="#fff" stroke-width="1.2"/><rect x="71.7" y="175" width="13" height="13.2" fill="#000"/><path d="M73.7 186 L83.7 177" stroke="#fff" stroke-width="2"/><circle cx="76.7" cy="183" r="3" fill="#fff"/><path d="M80.7 179 L89.7 172" stroke="#fff" stroke-width="1.2"/><rect x="71.7" y="197.4" width="13" height="13.2" fill="#000"/><path d="M73.7 208.4 L83.7 199.4" stroke="#fff" stroke-width="2"/><circle cx="76.7" cy="205.4" r="3" fill="#fff"/><circle cx="122" cy="151.7" r="7.3" fill="#fff" stroke="#000" stroke-width="1.4"/><path d="M118.5 155.7 L118.5 149.7 C118.5 146.7 125.5 146.7 125.5 149.7 L125.5 155.7 Z" fill="#000"/><circle cx="122" cy="172" r="7.3" fill="#fff" stroke="#000" stroke-width="1.4"/><path d="M118.5 176 L118.5 170 C118.5 167 125.5 167 125.5 170 L125.5 176 Z" fill="#000"/><circle cx="122" cy="192.2" r="7.3" fill="#fff" stroke="#000" stroke-width="1.4"/><path d="M118.5 196.2 L118.5 190.2 C118.5 187.2 125.5 187.2 125.5 190.2 L125.5 196.2 Z" fill="#000"/><circle cx="122" cy="212.6" r="7.3" fill="#fff" stroke="#000" stroke-width="1.4"/><path d="M118.5 216.6 L118.5 210.6 C118.5 207.6 125.5 207.6 125.5 210.6 L125.5 216.6 Z" fill="#000"/><circle cx="142.2" cy="151.7" r="7.3" fill="#fff" stroke="#000" stroke-width="1.4"/><path d="M138.7 155.7 L138.7 149.7 C138.7 146.7 145.7 146.7 145.7 149.7 L145.7 155.7 Z" fill="#000"/><circle cx="142.2" cy="172" r="7.3" fill="#fff" stroke="#000" stroke-width="1.4"/><path d="M138.7 176 L138.7 170 C138.7 167 145.7 167 145.7 170 L145.7 176 Z" fill="#000"/><circle cx="142.2" cy="192.2" r="7.3" fill="#fff" stroke="#000" stroke-width="1.4"/><path d="M138.7 196.2 L138.7 190.2 C138.7 187.2 145.7 187.2 145.7 190.2 L145.7 196.2 Z" fill="#000"/><circle cx="142.2" cy="212.6" r="7.3" fill="#fff" stroke="#000" stroke-width="1.4"/><path d="M138.7 216.6 L138.7 210.6 C138.7 207.6 145.7 207.6 145.7 210.6 L145.7 216.6 Z" fill="#000"/><circle cx="162.5" cy="151.7" r="7.3" fill="#fff" stroke="#000" stroke-width="1.4"/><path d="M159.0 155.7 L159.0 149.7 C159.0 146.7 166.0 146.7 166.0 149.7 L166.0 155.7 Z" fill="#000"/><circle cx="162.5" cy="172" r="7.3" fill="#fff" stroke="#000" stroke-width="1.4"/><path d="M159.0 176 L159.0 170 C159.0 167 166.0 167 166.0 170 L166.0 176 Z" fill="#000"/><circle cx="162.5" cy="192.2" r="7.3" fill="#fff" stroke="#000" stroke-width="1.4"/><path d="M159.0 196.2 L159.0 190.2 C159.0 187.2 166.0 187.2 166.0 190.2 L166.0 196.2 Z" fill="#000"/><circle cx="162.5" cy="212.6" r="7.3" fill="#fff" stroke="#000" stroke-width="1.4"/><path d="M159.0 216.6 L159.0 210.6 C159.0 207.6 166.0 207.6 166.0 210.6 L166.0 216.6 Z" fill="#000"/><rect x="201" y="144.4" width="13.7" height="13.6" fill="#000"/><path d="M204.5 155.4 L204.5 149.4 C204.5 146.9 211 146.9 211 149.4 L211 155.4 Z" fill="#fff"/><rect x="201" y="165" width="13.7" height="13.6" fill="#000"/><path d="M204.5 176 L204.5 170 C204.5 167.5 211 167.5 211 170 L211 176 Z" fill="#fff"/><rect x="201" y="185.4" width="13.7" height="13.6" fill="#000"/><path d="M204.5 196.4 L204.5 190.4 C204.5 187.9 211 187.9 211 190.4 L211 196.4 Z" fill="#fff"/><rect x="201" y="205.8" width="13.7" height="13.6" fill="#000"/><path d="M204.5 216.8 L204.5 210.8 C204.5 208.3 211 208.3 211 210.8 L211 216.8 Z" fill="#fff"/><rect x="221.5" y="144.4" width="13.7" height="13.6" fill="#000"/><path d="M225.0 155.4 L225.0 149.4 C225.0 146.9 231.5 146.9 231.5 149.4 L231.5 155.4 Z" fill="#fff"/><rect x="221.5" y="165" width="13.7" height="13.6" fill="#000"/><path d="M225.0 176 L225.0 170 C225.0 167.5 231.5 167.5 231.5 170 L231.5 176 Z" fill="#fff"/><rect x="221.5" y="185.4" width="13.7" height="13.6" fill="#000"/><path d="M225.0 196.4 L225.0 190.4 C225.0 187.9 231.5 187.9 231.5 190.4 L231.5 196.4 Z" fill="#fff"/><rect x="221.5" y="205.8" width="13.7" height="13.6" fill="#000"/><path d="M225.0 216.8 L225.0 210.8 C225.0 208.3 231.5 208.3 231.5 210.8 L231.5 216.8 Z" fill="#fff"/><rect x="241.5" y="144.4" width="13.7" height="13.6" fill="#000"/><path d="M245.0 155.4 L245.0 149.4 C245.0 146.9 251.5 146.9 251.5 149.4 L251.5 155.4 Z" fill="#fff"/><rect x="241.5" y="165" width="13.7" height="13.6" fill="#000"/><path d="M245.0 176 L245.0 170 C245.0 167.5 251.5 167.5 251.5 170 L251.5 176 Z" fill="#fff"/><rect x="241.5" y="185.4" width="13.7" height="13.6" fill="#000"/><path d="M245.0 196.4 L245.0 190.4 C245.0 187.9 251.5 187.9 251.5 190.4 L251.5 196.4 Z" fill="#fff"/><rect x="241.5" y="205.8" width="13.7" height="13.6" fill="#000"/><path d="M245.0 216.8 L245.0 210.8 C245.0 208.3 251.5 208.3 251.5 210.8 L251.5 216.8 Z" fill="#fff"/><rect x="275.6" y="132" width="77.4" height="99.8" fill="#000"/><circle cx="294" cy="151.7" r="7.3" fill="#000" stroke="#fff" stroke-width="1.2"/><path d="M290.5 155.7 L290.5 149.7 C290.5 146.7 297.5 146.7 297.5 149.7 L297.5 155.7 Z" fill="#fff"/><circle cx="294" cy="172" r="7.3" fill="#000" stroke="#fff" stroke-width="1.2"/><path d="M290.5 176 L290.5 170 C290.5 167 297.5 167 297.5 170 L297.5 176 Z" fill="#fff"/><circle cx="294" cy="192.2" r="7.3" fill="#000" stroke="#fff" stroke-width="1.2"/><path d="M290.5 196.2 L290.5 190.2 C290.5 187.2 297.5 187.2 297.5 190.2 L297.5 196.2 Z" fill="#fff"/><circle cx="294" cy="212.6" r="7.3" fill="#000" stroke="#fff" stroke-width="1.2"/><path d="M290.5 216.6 L290.5 210.6 C290.5 207.6 297.5 207.6 297.5 210.6 L297.5 216.6 Z" fill="#fff"/><circle cx="314" cy="151.7" r="7.3" fill="#000" stroke="#fff" stroke-width="1.2"/><path d="M310.5 155.7 L310.5 149.7 C310.5 146.7 317.5 146.7 317.5 149.7 L317.5 155.7 Z" fill="#fff"/><circle cx="314" cy="172" r="7.3" fill="#000" stroke="#fff" stroke-width="1.2"/><path d="M310.5 176 L310.5 170 C310.5 167 317.5 167 317.5 170 L317.5 176 Z" fill="#fff"/><circle cx="314" cy="192.2" r="7.3" fill="#000" stroke="#fff" stroke-width="1.2"/><path d="M310.5 196.2 L310.5 190.2 C310.5 187.2 317.5 187.2 317.5 190.2 L317.5 196.2 Z" fill="#fff"/><circle cx="314" cy="212.6" r="7.3" fill="#000" stroke="#fff" stroke-width="1.2"/><path d="M310.5 216.6 L310.5 210.6 C310.5 207.6 317.5 207.6 317.5 210.6 L317.5 216.6 Z" fill="#fff"/><circle cx="334.6" cy="151.7" r="7.3" fill="#000" stroke="#fff" stroke-width="1.2"/><path d="M331.1 155.7 L331.1 149.7 C331.1 146.7 338.1 146.7 338.1 149.7 L338.1 155.7 Z" fill="#fff"/><circle cx="334.6" cy="172" r="7.3" fill="#000" stroke="#fff" stroke-width="1.2"/><path d="M331.1 176 L331.1 170 C331.1 167 338.1 167 338.1 170 L338.1 176 Z" fill="#fff"/><circle cx="334.6" cy="192.2" r="7.3" fill="#000" stroke="#fff" stroke-width="1.2"/><path d="M331.1 196.2 L331.1 190.2 C331.1 187.2 338.1 187.2 338.1 190.2 L338.1 196.2 Z" fill="#fff"/><circle cx="334.6" cy="212.6" r="7.3" fill="#000" stroke="#fff" stroke-width="1.2"/><path d="M331.1 216.6 L331.1 210.6 C331.1 207.6 338.1 207.6 338.1 210.6 L338.1 216.6 Z" fill="#fff"/></svg>
<svg style="left:1885px;top:1028px" width="364" height="364" viewBox="0 0 364 364" ><circle cx="331" cy="330.8" r="15.3" fill="#ffffff" opacity="0.85"/>
<circle cx="331" cy="330.8" r="14" fill="#6e6e6e"/>
<g fill="#fff"><circle cx="323.9" cy="333.9" r="2.4"/><circle cx="327.2" cy="331.4" r="3.3"/><circle cx="332.1" cy="328.4" r="4.1"/><circle cx="336.5" cy="332.9" r="3.4"/><rect x="323.9" y="331" width="12.6" height="5.3"/><rect x="327" y="328.5" width="6" height="4"/></g></svg>
<svg style="left:2288px;top:1028px" width="364" height="364" viewBox="0 0 364 364" ><defs><clipPath id="z1"><rect x="100" y="109" width="72.8" height="95"/></clipPath><clipPath id="z2"><rect x="185" y="109" width="94.2" height="145.7"/></clipPath><clipPath id="z3"><rect x="292.5" y="109" width="60.2" height="43.4"/></clipPath><clipPath id="z4"><rect x="292.5" y="160.6" width="60.2" height="43.4"/></clipPath><clipPath id="z5"><rect x="142" y="236" width="31.8" height="18.7"/></clipPath></defs><rect x="100" y="109" width="72.8" height="95" fill="#48b891"/><g clip-path="url(#z1)"><path d="M136.4 130.25 L162.65 156.5 L136.4 182.75 L110.15 156.5 Z" fill="none" stroke="#fff" stroke-width="0.6" opacity="0.75"/><path d="M136.4 126.05 L166.85 156.5 L136.4 186.95 L105.95 156.5 Z" fill="none" stroke="#fff" stroke-width="0.6" opacity="0.75"/><path d="M136.4 121.85 L171.05 156.5 L136.4 191.15 L101.75 156.5 Z" fill="none" stroke="#fff" stroke-width="0.6" opacity="0.75"/><path d="M100 150.2 L118.2 131.3 L136.4 152.3 M172.8 150.2 L154.6 131.3 L136.4 152.3 M100 162.8 L118.2 181.7 L136.4 160.7 M172.8 162.8 L154.6 181.7 L136.4 160.7" fill="none" stroke="#fff" stroke-width="0.6" opacity="0.7"/></g><path d="M136.4 135.5 L157.4 156.5 L136.4 177.5 L115.4 156.5 Z" fill="#fff"/><path d="M136.4 141.8 C141.65 147.05 141.65 153.35 136.4 154.82 C131.15 153.35 131.15 147.05 136.4 141.8 Z" fill="#2a9a78"/><path d="M136.4 171.2 C141.65 165.95 141.65 159.65 136.4 158.18 C131.15 159.65 131.15 165.95 136.4 171.2 Z" fill="#2a9a78"/><ellipse cx="124.85000000000001" cy="156.5" rx="4.2" ry="1.68" fill="#b8c43a"/><ellipse cx="147.95000000000002" cy="156.5" rx="4.2" ry="1.68" fill="#b8c43a"/><rect x="131.15" y="155.87" width="10.5" height="1.26" fill="#ef5d25"/><rect x="185" y="109" width="94.2" height="145.7" fill="#ef5d25"/><g clip-path="url(#z2)"><path d="M232.1 148.25 L265.85 182 L232.1 215.75 L198.35 182 Z" fill="none" stroke="#fff" stroke-width="0.6" opacity="0.75"/><path d="M232.1 142.85 L271.25 182 L232.1 221.15 L192.95 182 Z" fill="none" stroke="#fff" stroke-width="0.6" opacity="0.75"/><path d="M232.1 137.45 L276.65 182 L232.1 226.55 L187.55 182 Z" fill="none" stroke="#fff" stroke-width="0.6" opacity="0.75"/><path d="M185 173.9 L208.55 149.6 L232.1 176.6 M279.2 173.9 L255.65 149.6 L232.1 176.6 M185 190.1 L208.55 214.4 L232.1 187.4 M279.2 190.1 L255.65 214.4 L232.1 187.4" fill="none" stroke="#fff" stroke-width="0.6" opacity="0.7"/></g><path d="M232.1 155 L259.1 182 L232.1 209 L205.1 182 Z" fill="#fff"/><path d="M232.1 163.1 C238.85 169.85 238.85 177.95 232.1 179.84 C225.35 177.95 225.35 169.85 232.1 163.1 Z" fill="#2a9a78"/><path d="M232.1 200.9 C238.85 194.15 238.85 186.05 232.1 184.16 C225.35 186.05 225.35 194.15 232.1 200.9 Z" fill="#2a9a78"/><ellipse cx="217.25" cy="182" rx="5.4" ry="2.16" fill="#b8c43a"/><ellipse cx="246.95" cy="182" rx="5.4" ry="2.16" fill="#b8c43a"/><rect x="225.35" y="181.19" width="13.5" height="1.6199999999999999" fill="#ef5d25"/><rect x="292.5" y="109" width="60.2" height="43.4" fill="#ef5d25"/><g clip-path="url(#z3)"><path d="M322.6 111.94999999999999 L341.35 130.7 L322.6 149.45 L303.85 130.7 Z" fill="none" stroke="#fff" stroke-width="0.6" opacity="0.75"/><path d="M322.6 108.94999999999999 L344.35 130.7 L322.6 152.45 L300.85 130.7 Z" fill="none" stroke="#fff" stroke-width="0.6" opacity="0.75"/><path d="M322.6 105.94999999999999 L347.35 130.7 L322.6 155.45 L297.85 130.7 Z" fill="none" stroke="#fff" stroke-width="0.6" opacity="0.75"/><path d="M292.5 126.19999999999999 L307.55 112.69999999999999 L322.6 127.69999999999999 M352.7 126.19999999999999 L337.65 112.69999999999999 L322.6 127.69999999999999 M292.5 135.2 L307.55 148.7 L322.6 133.7 M352.7 135.2 L337.65 148.7 L322.6 133.7" fill="none" stroke="#fff" stroke-width="0.6" opacity="0.7"/></g><path d="M322.6 115.69999999999999 L337.6 130.7 L322.6 145.7 L307.6 130.7 Z" fill="#fff"/><path d="M322.6 120.19999999999999 C326.35 123.94999999999999 326.35 128.45 322.6 129.5 C318.85 128.45 318.85 123.94999999999999 322.6 120.19999999999999 Z" fill="#2a9a78"/><path d="M322.6 141.2 C326.35 137.45 326.35 132.95 322.6 131.89999999999998 C318.85 132.95 318.85 137.45 322.6 141.2 Z" fill="#2a9a78"/><ellipse cx="314.35" cy="130.7" rx="3.0" ry="1.2" fill="#b8c43a"/><ellipse cx="330.85" cy="130.7" rx="3.0" ry="1.2" fill="#b8c43a"/><rect x="318.85" y="130.25" width="7.5" height="0.8999999999999999" fill="#ef5d25"/><rect x="292.5" y="160.6" width="60.2" height="43.4" fill="#48b891"/><g clip-path="url(#z4)"><path d="M322.6 163.55 L341.35 182.3 L322.6 201.05 L303.85 182.3 Z" fill="none" stroke="#fff" stroke-width="0.6" opacity="0.75"/><path d="M322.6 160.55 L344.35 182.3 L322.6 204.05 L300.85 182.3 Z" fill="none" stroke="#fff" stroke-width="0.6" opacity="0.75"/><path d="M322.6 157.55 L347.35 182.3 L322.6 207.05 L297.85 182.3 Z" fill="none" stroke="#fff" stroke-width="0.6" opacity="0.75"/><path d="M292.5 177.8 L307.55 164.3 L322.6 179.3 M352.7 177.8 L337.65 164.3 L322.6 179.3 M292.5 186.8 L307.55 200.3 L322.6 185.3 M352.7 186.8 L337.65 200.3 L322.6 185.3" fill="none" stroke="#fff" stroke-width="0.6" opacity="0.7"/></g><path d="M322.6 167.3 L337.6 182.3 L322.6 197.3 L307.6 182.3 Z" fill="#fff"/><path d="M322.6 171.8 C326.35 175.55 326.35 180.05 322.6 181.10000000000002 C318.85 180.05 318.85 175.55 322.6 171.8 Z" fill="#2a9a78"/><path d="M322.6 192.8 C326.35 189.05 326.35 184.55 322.6 183.5 C318.85 184.55 318.85 189.05 322.6 192.8 Z" fill="#2a9a78"/><ellipse cx="314.35" cy="182.3" rx="3.0" ry="1.2" fill="#b8c43a"/><ellipse cx="330.85" cy="182.3" rx="3.0" ry="1.2" fill="#b8c43a"/><rect x="318.85" y="181.85000000000002" width="7.5" height="0.8999999999999999" fill="#ef5d25"/><rect x="142" y="236" width="31.8" height="18.7" fill="#48b891"/><g clip-path="url(#z5)"><path d="M157.9 235.3 L167.9 245.3 L157.9 255.3 L147.9 245.3 Z" fill="none" stroke="#fff" stroke-width="0.6" opacity="0.75"/><path d="M157.9 233.70000000000002 L169.5 245.3 L157.9 256.90000000000003 L146.3 245.3 Z" fill="none" stroke="#fff" stroke-width="0.6" opacity="0.75"/><path d="M157.9 232.10000000000002 L171.1 245.3 L157.9 258.5 L144.70000000000002 245.3 Z" fill="none" stroke="#fff" stroke-width="0.6" opacity="0.75"/><path d="M142 242.9 L149.95 235.70000000000002 L157.9 243.70000000000002 M173.8 242.9 L165.85 235.70000000000002 L157.9 243.70000000000002 M142 247.70000000000002 L149.95 254.9 L157.9 246.9 M173.8 247.70000000000002 L165.85 254.9 L157.9 246.9" fill="none" stroke="#fff" stroke-width="0.6" opacity="0.7"/></g><path d="M157.9 237.3 L165.9 245.3 L157.9 253.3 L149.9 245.3 Z" fill="#fff"/><path d="M157.9 239.70000000000002 C159.9 241.70000000000002 159.9 244.10000000000002 157.9 244.66000000000003 C155.9 244.10000000000002 155.9 241.70000000000002 157.9 239.70000000000002 Z" fill="#2a9a78"/><path d="M157.9 250.9 C159.9 248.9 159.9 246.5 157.9 245.94 C155.9 246.5 155.9 248.9 157.9 250.9 Z" fill="#2a9a78"/><ellipse cx="153.5" cy="245.3" rx="1.6" ry="0.64" fill="#b8c43a"/><ellipse cx="162.3" cy="245.3" rx="1.6" ry="0.64" fill="#b8c43a"/><rect x="155.9" y="245.06" width="4.0" height="0.48" fill="#ef5d25"/><path d="M20 118 L24 113 L28 118 L24 123 Z" fill="#2a9a78"/><rect x="18" y="117" width="12" height="2" fill="#b8c43a"/><rect x="17" y="128" width="8" height="1" fill="#333"/><rect x="17" y="131" width="9" height="0.8" fill="#666"/><rect x="17" y="136" width="6" height="1" fill="#333"/>
<rect x="146" y="218" width="10" height="1" fill="#ef5d25"/><rect x="146" y="225" width="8" height="1.2" fill="#333"/>
<path d="M174 212 L162 222 L174 231 M169 212 L157 222 L169 231" fill="none" stroke="#9ed8c4" stroke-width="1" opacity="0.6"/>
<rect x="300" y="227" width="14" height="1" fill="#ef5d25"/><rect x="297" y="232" width="20" height="3.5" fill="#ccc"/><rect x="303" y="243" width="7" height="1.2" fill="#ef5d25"/>
<rect x="322" y="219" width="0.6" height="29" fill="#d0d0d0"/><rect x="343" y="213" width="7.5" height="10" fill="#bdbdbd"/>
<g fill="#d6d6d6"><rect x="325" y="234" width="24" height="0.6"/><rect x="325" y="238" width="24" height="0.6"/><rect x="325" y="242" width="24" height="0.6"/></g></svg>
<svg style="left:2291px;top:1028px" width="364" height="364" viewBox="0 0 364 364" ><circle cx="331" cy="330.8" r="15.3" fill="#ffffff" opacity="0.85"/>
<circle cx="331" cy="330.8" r="14" fill="#6e6e6e"/>
<g fill="#fff"><circle cx="323.9" cy="333.9" r="2.4"/><circle cx="327.2" cy="331.4" r="3.3"/><circle cx="332.1" cy="328.4" r="4.1"/><circle cx="336.5" cy="332.9" r="3.4"/><rect x="323.9" y="331" width="12.6" height="5.3"/><rect x="327" y="328.5" width="6" height="4"/></g></svg>
<svg style="left:1073px;top:1588px" width="364" height="364" viewBox="0 0 364 364" >
<defs>
<clipPath id="c9clip"><rect x="14" y="70" width="336" height="224"/></clipPath>
<filter id="c9blur" x="-20%" y="-20%" width="140%" height="140%"><feGaussianBlur stdDeviation="5"/></filter>
<filter id="c9blur2" x="-20%" y="-20%" width="140%" height="140%"><feGaussianBlur stdDeviation="1.6"/></filter>
<linearGradient id="c9tab" x1="0" y1="0" x2="1" y2="1"><stop offset="0" stop-color="#e8c8a4"/><stop offset="1" stop-color="#f2d8c0"/></linearGradient>
</defs>
<g clip-path="url(#c9clip)">
<rect x="14" y="70" width="336" height="224" fill="#f3f3f3"/>
<g filter="url(#c9blur)">
<rect x="260" y="80" width="90" height="90" fill="#f8f8fa"/>
<rect x="10" y="140" width="100" height="110" fill="#c8a4a4"/>
<rect x="20" y="160" width="40" height="60" fill="#d88a8a"/>
<rect x="62.8" y="155" width="38" height="76" fill="#5e5e66"/>
<rect x="80" y="150" width="12" height="90" fill="#e6e6e6"/>
<rect x="253.8" y="168" width="96" height="24" fill="#38a0a8"/>
</g>
<path d="M135.7 228 L349.8 193 L349.8 294 L201 294 Z" fill="url(#c9tab)"/>
<g filter="url(#c9blur2)">
<path d="M251 190 C280 183 320 182 349.8 186 L349.8 223 L270 224 C255 215 248 200 251 190 Z" fill="#5aa040"/>
<path d="M308 214 C320 208 340 210 349.8 214 L349.8 238 L315 240 Z" fill="#6a1e50"/>
<path d="M235 222 C245 216 265 218 280 226 L262 236 L240 234 Z" fill="#b07090"/>
<path d="M13.8 243 C40 225 60 213 75 213 C95 215 110 225 125.7 233 C160 250 200 268 218.6 281 L218.6 294 L13.8 294 Z" fill="#4a8a34"/>
<path d="M30 235 C50 222 70 220 95 228 L110 250 L50 258 Z" fill="#62a844"/>
<path d="M13.8 268 L100 258 L170 275 L200 294 L13.8 294 Z" fill="#3a7428"/>
</g>
<g filter="url(#c9blur2)">
<path d="M176 133 L241 120 L245 168 L180 175 Z" fill="#5a9a38"/>
<path d="M239 138 C260 125 285 112 312 100" fill="none" stroke="#e08a38" stroke-width="5" stroke-dasharray="4 3"/>
<path d="M245 130 C265 118 290 108 305 104" fill="none" stroke="#c87a30" stroke-width="3"/>
<ellipse cx="226" cy="119" rx="14" ry="13" fill="#f09030"/>
<ellipse cx="210" cy="148" rx="13" ry="12" fill="#f07820"/>
<ellipse cx="141" cy="166" rx="15" ry="11" fill="#70a030"/>
<ellipse cx="155" cy="163" rx="8" ry="6" fill="#a04080"/>
<ellipse cx="171" cy="168" rx="11" ry="12" fill="#e86a20"/>
<ellipse cx="191" cy="173" rx="13" ry="11" fill="#f0eed0"/>
<ellipse cx="232" cy="185" rx="21" ry="21" fill="#8098c0"/>
<ellipse cx="220" cy="186" rx="11" ry="10" fill="#f07a20"/>
<path d="M75 193 C90 175 110 168 126 170 L122 190 C105 188 90 192 80 198 Z" fill="#d07090"/>
<ellipse cx="160" cy="195" rx="17" ry="16" fill="#f0a030"/>
<ellipse cx="117" cy="198" rx="9" ry="8" fill="#803060"/>
<ellipse cx="191" cy="197" rx="14" ry="16" fill="#80803a"/>
<ellipse cx="128" cy="218" rx="20" ry="14" fill="#9a9050"/>
<ellipse cx="218" cy="210" rx="13" ry="13" fill="#5a40c0"/>
<ellipse cx="238" cy="206" rx="11" ry="7" fill="#8a3080"/>
</g>
<path d="M150 206 L207 206 L203 224 L191 228 L191 240 L170 240 L170 228 L156 224 Z" fill="#e6dece"/>

<!-- inset -->
<rect x="24.6" y="82.5" width="111.1" height="71.1" fill="#dcc0a0"/>
<rect x="24.6" y="82.5" width="111.1" height="24" fill="#f2dede"/>
<rect x="24.6" y="82.5" width="24" height="24" fill="#4a6a80"/>
<rect x="95" y="82.5" width="40" height="20" fill="#e07080" opacity="0.6"/>
<rect x="24.6" y="106" width="111.1" height="10" fill="#e8d4bc"/>
<g filter="url(#c9blur2)">
<ellipse cx="46" cy="134" rx="13" ry="10" fill="#b03068"/>
<ellipse cx="78" cy="130" rx="22" ry="11" fill="#8a3a8a"/>
<ellipse cx="110" cy="130" rx="16" ry="9" fill="#6a9a50"/>
<ellipse cx="70" cy="122" rx="10" ry="6" fill="#d080b0"/>
</g>
</g>
</svg>
<svg style="left:1073px;top:1588px" width="364" height="364" viewBox="0 0 364 364" ><circle cx="331" cy="330.8" r="15.3" fill="#ffffff" opacity="0.85"/>
<circle cx="331" cy="330.8" r="14" fill="#6e6e6e"/>
<g fill="#fff"><circle cx="323.9" cy="333.9" r="2.4"/><circle cx="327.2" cy="331.4" r="3.3"/><circle cx="332.1" cy="328.4" r="4.1"/><circle cx="336.5" cy="332.9" r="3.4"/><rect x="323.9" y="331" width="12.6" height="5.3"/><rect x="327" y="328.5" width="6" height="4"/></g></svg>
<!-- CC logo -->
<div class="a" style="left:611px;top:244.8px;width:24.5px;height:23.5px;border-radius:6px;background:conic-gradient(from 0deg at 50% 50%,#ff1a00 0deg,#ff6a00 50deg,#ffb000 90deg,#e8e000 120deg,#58d83a 140deg,#6cc7a0 175deg,#2f8cff 215deg,#7a5cff 255deg,#c02ee8 285deg,#ff1aa0 320deg,#ff0040 345deg,#ff1a00 360deg);box-shadow:0 1px 1.5px rgba(0,0,0,0.35);"></div>
<svg style="left:611px;top:244.8px" width="25" height="24" viewBox="0 0 25 24">
<defs><mask id="ccm"><rect x="0" y="0" width="25" height="24" fill="#000"/>
<g fill="#fff"><circle cx="8.2" cy="12.4" r="5.6"/><circle cx="15.6" cy="10.6" r="6.4"/><rect x="8.2" y="12" width="7.4" height="5.9"/></g>
<g fill="#000"><circle cx="8.2" cy="12.4" r="4.2"/><circle cx="15.6" cy="10.6" r="5"/><rect x="8.2" y="12" width="7.4" height="4.5"/></g>
</mask></defs>
<rect x="0" y="0" width="25" height="24" fill="#fff" mask="url(#ccm)"/>
<path d="M6.2 10.6 L11.8 16 C13 17 14.2 17.2 15.6 17.1 C18.4 16.9 20.2 14.6 20.2 11.6 C20.2 8.6 18 6.6 15.4 6.6 C13.6 6.6 12.3 7.6 11.6 8.6" fill="none" stroke="#fff" stroke-width="1.3" stroke-linecap="round"/>
</svg>
<!-- window controls -->
<div class="a" style="left:2627px;top:256.5px;width:15px;height:1.5px;background:#8d8d8d;"></div>
<div class="a" style="left:2708px;top:250px;width:12.5px;height:12.5px;border:1.5px solid #8d8d8d;border-radius:1.5px;"></div>
<svg style="left:2789px;top:250px" width="16" height="16" viewBox="0 0 16 16"><path d="M0.5 0.5 L15.5 15.5 M15.5 0.5 L0.5 15.5" stroke="#8d8d8d" stroke-width="1.5"/></svg>
<!-- hamburger -->
<div class="a" style="left:623.5px;top:311px;width:24.5px;height:3px;background:#6e6e6e;border-radius:0.5px;"></div>
<div class="a" style="left:623.5px;top:320.2px;width:24.5px;height:3px;background:#6e6e6e;border-radius:0.5px;"></div>
<div class="a" style="left:623.5px;top:329px;width:24.5px;height:3px;background:#6e6e6e;border-radius:0.5px;"></div>
<!-- search icon -->
<svg style="left:1765px;top:303px" width="30" height="30" viewBox="0 0 30 30"><circle cx="12.3" cy="12.6" r="9.2" fill="none" stroke="#6e6e6e" stroke-width="3"/><path d="M18.8 19.2 L26.5 26.7" stroke="#6e6e6e" stroke-width="3.2" stroke-linecap="round"/></svg>
<!-- f icon -->
<svg style="left:2570px;top:295px" width="40" height="50" viewBox="0 0 40 50">
<path d="M26.9 11.2 C26.4 9.8 24.8 9.4 23.5 10 C21.4 11 20.5 13.5 19.6 17 L15.2 33 C14.4 36 13 38.6 10.4 38.8 C9.2 38.9 8.3 38.5 8 37.5" fill="none" stroke="#6e6e6e" stroke-width="2.8" stroke-linecap="round"/>
<circle cx="27" cy="12" r="1.8" fill="#6e6e6e"/>
<circle cx="7.9" cy="37" r="1.8" fill="#6e6e6e"/>
<path d="M13.3 19.4 L23.7 19.4" stroke="#6e6e6e" stroke-width="1.8" stroke-linecap="round"/>
</svg>
<!-- bell -->
<svg style="left:2570px;top:295px" width="100" height="50" viewBox="0 0 100 50">
<path d="M79.2 9 L80.6 9 C81 9 81.2 9.3 81.2 9.6 L81.2 12.6 C85.5 13 87.3 15.2 87.5 19 C87.7 23 87.5 27 89.5 30 L91.9 32.2 L91.9 33.7 L67.7 33.7 L67.7 32.2 L70.2 30 C72.1 27 71.8 23 72 19 C72.3 15.2 74.1 13 78.6 12.6 L78.6 9.6 C78.6 9.3 78.8 9 79.2 9 Z" fill="#6e6e6e"/>
<path d="M76.4 35.3 L82.8 35.3 C82.6 37.3 81.3 38.8 79.6 38.8 C77.9 38.8 76.6 37.3 76.4 35.3 Z" fill="#6e6e6e"/>
</svg>
<!-- cloud -->
<svg style="left:2690px;top:290px" width="60" height="50" viewBox="0 0 60 50">
<g fill="#6e6e6e"><circle cx="16.2" cy="34.5" r="4.9"/><circle cx="23.5" cy="28.7" r="7.6"/><circle cx="34.4" cy="22.8" r="8.8"/><circle cx="43.6" cy="32.2" r="7.2"/><rect x="16.2" y="29" width="27.5" height="10.4"/><rect x="25" y="22" width="14" height="10"/></g>
</svg>
<!-- avatar -->
<svg style="left:2773px;top:296px" width="44" height="44" viewBox="0 0 44 44">
<defs><clipPath id="avc"><circle cx="22" cy="22" r="21"/></clipPath></defs>
<circle cx="22" cy="22" r="21" fill="#f7e300"/>
<g clip-path="url(#avc)">
<path d="M8.1 25 A12.6 12.6 0 0 1 33.3 25" fill="none" stroke="#ff9fd6" stroke-width="4"/>
<path d="M11.2 25 A9.5 9.5 0 0 1 30.2 25" fill="none" stroke="#e8003a" stroke-width="4"/>
<path d="M14.7 25 A6 6 0 0 1 26.7 25" fill="none" stroke="#ffa64a" stroke-width="4.2"/>
<path d="M4.6 31 C4.6 28.5 6.2 27 8.3 27 C9 24 11.5 22.3 14.2 22.6 C17 23 18.8 25 19.2 27.3 C20.8 27.3 21.8 29 21.7 31 Z" fill="#ffffff"/>
<path d="M4.6 29.8 L21.7 29.8 L21.7 31 L4.6 31 Z" fill="#d0d0dc"/>
<path d="M24 24.8 C24 23 25.5 22 27 22.3 C27.8 19.8 30.2 18.8 32.3 19.6 C34 18.2 36.5 18.6 37.5 20.5 C39.2 20.8 40 22.8 39 24.8 Z" fill="#ffffff"/>
<path d="M17.3 36.6 L31.6 22.5 L35 25.8 L20.7 39.9 Z" fill="#1b7cff"/>
<path d="M27.4 26.6 L31.6 22.5 L35 25.8 L30.8 29.9 Z" fill="#8fd0ff"/>
<path d="M17.3 36.6 L20.3 33.6 L23.7 36.9 L20.7 39.9 Z" fill="#0044d0"/>
<path d="M22.6 31.4 L25 29 L28.4 32.3 L26 34.7 Z" fill="#0a5ae8"/>
<circle cx="16" cy="7.3" r="3.4" fill="#fff"/><circle cx="23.7" cy="7" r="3.4" fill="#fff"/>
<circle cx="15.8" cy="6.8" r="1.7" fill="#1e5cff"/><circle cx="23.4" cy="6.6" r="1.7" fill="#1e5cff"/>
<path d="M36 25.5 L37 27.6 L39.2 28 L37.4 29.2 L37.3 31.4 L36 29.7 L33.9 29.5 L35.4 28 Z" fill="#1e5cff"/>
<path d="M33 19.5 L33.6 20.8 L35 21 L33.8 21.7 L33.7 23 L33 22 L31.8 21.8 L32.6 20.9 Z" fill="#1e5cff"/>
</g>
</svg>
<!-- sidebar: doc icon -->
<svg style="left:640px;top:395px" width="50" height="50" viewBox="0 0 50 50">
<path d="M12 11.9 L22.2 11.9 L32 22.2 L32 37.3 L12 37.3 Z" fill="none" stroke="#4b4b4b" stroke-width="1.6" stroke-linejoin="miter"/>
<path d="M22.2 11.9 L22.2 22.2 L32 22.2" fill="none" stroke="#4b4b4b" stroke-width="1.6"/>
</svg>
<!-- libraries icon -->
<svg style="left:640px;top:460px" width="50" height="50" viewBox="0 0 50 50">
<path d="M11.8 32.4 L8.8 32.4 L8.8 9.6 L32.2 9.6 L32.2 12.8" fill="none" stroke="#4b4b4b" stroke-width="1.5"/>
<rect x="12.4" y="13.2" width="23.2" height="22.3" fill="#fff" stroke="#4b4b4b" stroke-width="1.5"/>
<path d="M25.7 13.2 L33 13.2 L33 25.8 L29.35 22.6 L25.7 25.8 Z" fill="#4b4b4b"/>
</svg>
<!-- shared icon -->
<svg style="left:640px;top:460px" width="50" height="110" viewBox="0 0 50 110">
<path d="M28.5 73 C31.6 73 33.2 75.8 33.2 78.8 C33.2 81.7 31.8 84 29.7 85 L29.7 86 C33.8 86.8 37.6 89.5 37.6 96.5 L34.5 96.5 C34 90 30.8 87.6 26.7 86.8 L26.5 85.5 C28 84 28.9 81.8 28.9 79 C28.9 76.5 28 74.6 26.2 73.6 C26.9 73.2 27.7 73 28.5 73 Z" fill="#4b4b4b"/>
<path d="M19.4 72.2 C23.2 72.2 25.6 75.4 25.6 79.2 C25.6 82.3 24.4 84.8 22.2 86 L22.2 87.3 C28.6 88.4 32.6 91.2 32.6 98.8 L6.2 98.8 C6.2 91.2 10.2 88.4 16.6 87.3 L16.6 86 C14.4 84.8 13.2 82.3 13.2 79.2 C13.2 75.4 15.6 72.2 19.4 72.2 Z" fill="#4b4b4b"/>
</svg>
<!-- trash icon -->
<svg style="left:640px;top:580px" width="50" height="50" viewBox="0 0 50 50">
<path d="M8 19 L34.2 19" stroke="#4b4b4b" stroke-width="1.6"/>
<path d="M15.8 19 L15.8 15.6 L26.8 15.6 L26.8 19" fill="none" stroke="#4b4b4b" stroke-width="1.6"/>
<path d="M10.4 19 L12.4 41.2 L30 41.2 L32 19" fill="none" stroke="#4b4b4b" stroke-width="1.6"/>
<path d="M16.9 23.8 L18 36.8 M21.2 23.8 L21.2 36.8 M25.5 23.8 L24.4 36.8" stroke="#4b4b4b" stroke-width="1.5"/>
</svg>
<!-- folder icon -->
<svg style="left:640px;top:1960px" width="50" height="50" viewBox="0 0 50 50">
<path d="M8 10.3 L15.9 10.3 L19.8 13.8 L8 13.8 Z" fill="#4b4b4b"/>
<path d="M8 16 L36 16 L36 28.8 C33 26.7 30.4 26 28 25.7 L28 23.2 L17.2 31.4 L19.6 35.5 L8 35.5 Z" fill="#4b4b4b"/>
<path d="M26.1 24.8 L26.1 28.2 C32.5 28.6 36.3 32.8 37.8 38.7 C35 35.3 31.5 34 26.1 34 L26.1 37.7 L19.7 31.3 Z" fill="#4b4b4b"/>
</svg>
<!-- list icon -->
<div class="a" style="left:1072.8px;top:1993.9px;width:7.1px;height:6.5px;border-radius:1px;background:#6e6e6e;"></div>
<div class="a" style="left:1072.8px;top:2004.3px;width:7.1px;height:6.5px;border-radius:1px;background:#6e6e6e;"></div>
<div class="a" style="left:1072.8px;top:2014.4px;width:7.1px;height:6.8px;border-radius:1px;background:#6e6e6e;"></div>
<div class="a" style="left:1082.1px;top:1995.6px;width:18.9px;height:3.3px;background:#6e6e6e;"></div>
<div class="a" style="left:1082.1px;top:2005.8px;width:18.9px;height:3.2px;background:#6e6e6e;"></div>
<div class="a" style="left:1082.1px;top:2016px;width:18.9px;height:3.4px;background:#6e6e6e;"></div>
<!-- grid icon -->
<div class="a" style="left:1135.9px;top:1993.9px;width:12.1px;height:11.7px;border-radius:1px;background:#6e6e6e;"></div>
<div class="a" style="left:1151.9px;top:1993.9px;width:12.2px;height:11.7px;border-radius:1px;background:#6e6e6e;"></div>
<div class="a" style="left:1135.9px;top:2009.2px;width:12.1px;height:11.8px;border-radius:1px;background:#6e6e6e;"></div>
<div class="a" style="left:1151.9px;top:2009.2px;width:12.2px;height:11.8px;border-radius:1px;background:#6e6e6e;"></div>
<!-- sort icon -->
<div class="a" style="left:1221.8px;top:1999px;width:17.3px;height:2.9px;border-radius:1px;background:#6e6e6e;"></div>
<div class="a" style="left:1221.8px;top:2006px;width:13.8px;height:3px;border-radius:1px;background:#6e6e6e;"></div>
<div class="a" style="left:1221.8px;top:2012.9px;width:10.4px;height:3.1px;border-radius:1px;background:#6e6e6e;"></div>
<svg style="left:1240px;top:1995px" width="15" height="25" viewBox="0 0 15 25"><path d="M7.2 4 L7.2 19" stroke="#6e6e6e" stroke-width="2.4"/><path d="M3 18 L11.4 18 L7.2 21.8 Z" fill="#6e6e6e" stroke="#6e6e6e" stroke-width="1" stroke-linejoin="round"/></svg>
<!-- refresh icon -->
<svg style="left:2690px;top:1988px" width="44" height="40" viewBox="0 0 44 40">
<path d="M8.6 15.6 A13 13 0 0 1 30 9.8" fill="none" stroke="#6e6e6e" stroke-width="3.4"/>
<path d="M35.4 7.2 L35.4 17.8 L24.8 17.8 Z" fill="#6e6e6e"/>
<path d="M33.4 23.4 A13 13 0 0 1 12 29.2" fill="none" stroke="#6e6e6e" stroke-width="3.4"/>
<path d="M6.6 31.8 L6.6 21.2 L17.2 21.2 Z" fill="#6e6e6e"/>
</svg>

<div class=t style="left:642.09px;top:248.36px;font-size:22.6px;line-height:22.6px;font-weight:400;font-style:normal;color:#8a8a8a;transform:scaleX(0.9070);-webkit-text-stroke:0.1px currentColor;">Creative Cloud Desktop</div>
<div class=t style="left:676.00px;top:307.09px;font-size:24.7px;line-height:24.7px;font-weight:400;font-style:normal;color:#6e6e6e;transform:scaleX(0.8762);">Apps</div>
<div class=t style="left:756.27px;top:307.09px;font-size:24.7px;line-height:24.7px;font-weight:400;font-style:normal;color:#2c2c2c;transform:scaleX(0.8638);">Files</div>
<div class=t style="left:832.19px;top:307.09px;font-size:24.7px;line-height:24.7px;font-weight:400;font-style:normal;color:#6e6e6e;transform:scaleX(0.9061);">Discover</div>
<div class=t style="left:949.49px;top:307.09px;font-size:24.7px;line-height:24.7px;font-weight:400;font-style:normal;color:#6e6e6e;transform:scaleX(0.9094);">Stock &amp; Marketplace</div>
<div class=t style="left:1810.00px;top:306.49px;font-size:25.4px;line-height:25.4px;font-weight:400;font-style:italic;color:#6e6e6e;transform:scaleX(0.8154);">Search Creative Cloud</div>
<div class=t style="left:699.00px;top:408.49px;font-size:25.4px;line-height:25.4px;font-weight:400;font-style:normal;color:#4b4b4b;transform:scaleX(0.8657);">Your files</div>
<div class=t style="left:699.00px;top:471.49px;font-size:25.4px;line-height:25.4px;font-weight:400;font-style:normal;color:#4b4b4b;transform:scaleX(0.8734);">Your libraries</div>
<div class=t style="left:698.11px;top:534.49px;font-size:25.4px;line-height:25.4px;font-weight:400;font-style:normal;color:#4b4b4b;transform:scaleX(0.8891);">Shared with you</div>
<div class=t style="left:697.18px;top:597.49px;font-size:25.4px;line-height:25.4px;font-weight:400;font-style:normal;color:#4b4b4b;transform:scaleX(0.9124);">Deleted</div>
<div class=t style="left:1094.00px;top:391.15px;font-size:28.4px;line-height:28.4px;font-weight:700;font-style:normal;color:#2c2c2c;transform:scaleX(0.8540);-webkit-text-stroke:0px;">Your files</div>
<div class=t style="left:624.03px;top:1911.50px;font-size:18.9px;line-height:18.9px;font-weight:400;font-style:normal;color:#6e6e6e;transform:scaleX(0.9733);letter-spacing:0.5px;">LAUNCH</div>
<div class=t style="left:698.13px;top:1973.49px;font-size:25.4px;line-height:25.4px;font-weight:400;font-style:normal;color:#4b4b4b;transform:scaleX(0.8747);">Open sync folder</div>
<div class=t style="left:1072.24px;top:873.99px;font-size:25.4px;line-height:25.4px;font-weight:400;font-style:normal;color:#4b4b4b;transform:scaleX(0.8787);">Background_Layer</div>
<div class=t style="left:1073.09px;top:910.61px;font-size:20.3px;line-height:20.3px;font-weight:400;font-style:normal;color:#6e6e6e;transform:scaleX(0.9148);">PSDC • 6 months ago</div>
<div class=t style="left:1478.24px;top:873.99px;font-size:25.4px;line-height:25.4px;font-weight:400;font-style:normal;color:#4b4b4b;transform:scaleX(0.8787);">Recolor_artwork</div>
<div class=t style="left:1480.00px;top:910.61px;font-size:20.3px;line-height:20.3px;font-weight:400;font-style:normal;color:#6e6e6e;transform:scaleX(0.9148);">AIC • 6 months ago</div>
<div class=t style="left:1884.24px;top:873.99px;font-size:25.4px;line-height:25.4px;font-weight:400;font-style:normal;color:#4b4b4b;transform:scaleX(0.8787);">Dashed_Lines</div>
<div class=t style="left:1886.00px;top:910.61px;font-size:20.3px;line-height:20.3px;font-weight:400;font-style:normal;color:#6e6e6e;transform:scaleX(0.9148);">AIC • 6 months ago</div>
<div class=t style="left:2291.12px;top:873.99px;font-size:25.4px;line-height:25.4px;font-weight:400;font-style:normal;color:#4b4b4b;transform:scaleX(0.8787);">Creating_Swatches</div>
<div class=t style="left:2292.00px;top:910.61px;font-size:20.3px;line-height:20.3px;font-weight:400;font-style:normal;color:#6e6e6e;transform:scaleX(0.9148);">AIC • 6 months ago</div>
<div class=t style="left:1073.12px;top:1433.99px;font-size:25.4px;line-height:25.4px;font-weight:400;font-style:normal;color:#4b4b4b;transform:scaleX(0.8787);">Changing_Color</div>
<div class=t style="left:1074.00px;top:1470.61px;font-size:20.3px;line-height:20.3px;font-weight:400;font-style:normal;color:#6e6e6e;transform:scaleX(0.9148);">AIC • 6 months ago</div>
<div class=t style="left:1480.00px;top:1433.99px;font-size:25.4px;line-height:25.4px;font-weight:400;font-style:normal;color:#4b4b4b;transform:scaleX(0.8787);">Tour1</div>
<div class=t style="left:1480.00px;top:1470.61px;font-size:20.3px;line-height:20.3px;font-weight:400;font-style:normal;color:#6e6e6e;transform:scaleX(0.9148);">AIC • 6 months ago</div>
<div class=t style="left:1885.12px;top:1433.99px;font-size:25.4px;line-height:25.4px;font-weight:400;font-style:normal;color:#4b4b4b;transform:scaleX(0.8787);">Saving</div>
<div class=t style="left:1886.00px;top:1470.61px;font-size:20.3px;line-height:20.3px;font-weight:400;font-style:normal;color:#6e6e6e;transform:scaleX(0.9148);">AIC • 6 months ago</div>
<div class=t style="left:2292.00px;top:1433.99px;font-size:25.4px;line-height:25.4px;font-weight:400;font-style:normal;color:#4b4b4b;transform:scaleX(0.8787);">Zooming</div>
<div class=t style="left:2292.00px;top:1470.61px;font-size:20.3px;line-height:20.3px;font-weight:400;font-style:normal;color:#6e6e6e;transform:scaleX(0.9148);">AIC • 6 months ago</div>
</body></html>
